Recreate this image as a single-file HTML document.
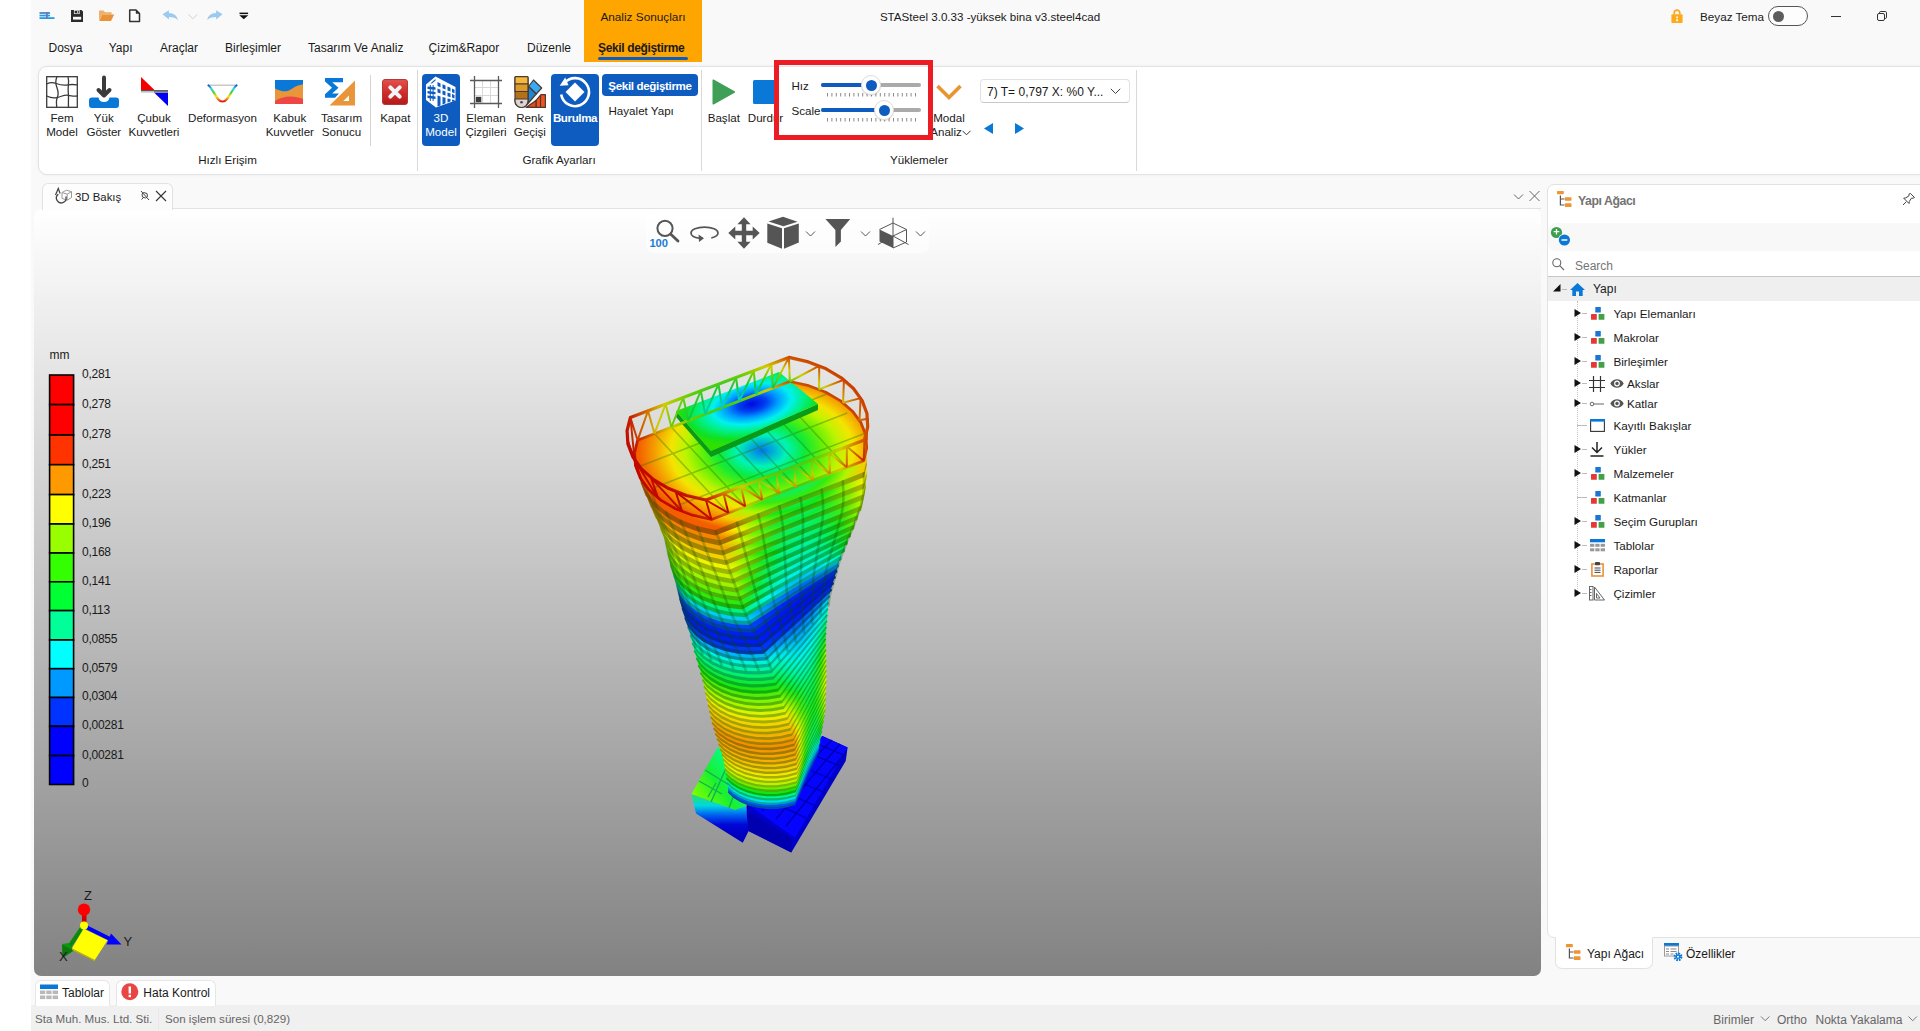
<!DOCTYPE html>
<html lang="tr"><head><meta charset="utf-8"><title>STASteel 3.0.33</title>
<style>
*{box-sizing:border-box;margin:0;padding:0}
html,body{width:1920px;height:1031px;overflow:hidden;background:#fff}
body{font-family:"Liberation Sans",sans-serif;font-size:11.6px;color:#1a1a1a}
#app{position:absolute;left:0;top:0;width:1920px;height:1031px;overflow:hidden;background:#fff}
.a{position:absolute}
.t{position:absolute;white-space:nowrap;line-height:14px;height:14px}
.b{font-weight:bold}
svg{position:absolute;overflow:visible}
#win{position:absolute;left:31px;top:0;width:1889px;height:1031px;background:#f9f9f9}
#tabhl{position:absolute;left:584px;top:0;width:118px;height:62px;background:#ffa500}
#ribbon{position:absolute;left:38px;top:66px;width:1890px;height:109px;background:#fff;border:1px solid #e3e3e3;border-radius:9px 0 0 9px;box-shadow:0 0 3px rgba(0,0,0,.06)}
.gsep{position:absolute;top:70px;width:1px;height:101px;background:#d9d9d9}
.bluebtn{position:absolute;background:#0e5cbf;border-radius:4px}
#status{position:absolute;left:31px;top:1005px;width:1889px;height:26px;background:#f0f0f0}
.gr{color:#666}

</style></head>
<body>
<div id="app">
<div id="win"></div>
<div id="tabhl"></div>
<svg style="left:38px;top:8px" width="215" height="16" viewBox="38 8 215 16">
<rect x="39.500" y="12.100" width="10.500" height="1.800" fill="#5b7fc0"/><rect x="39.500" y="14.700" width="10.500" height="1.700" fill="#1ea0e6"/><rect x="39.500" y="17.200" width="15" height="1.800" fill="#1ea0e6"/><rect x="46" y="12.100" width="1.800" height="6.900" fill="#5b7fc0"/>
<path d="M71 10h10.400l1.600 1.600v10.400h-12z" fill="#2b2b2b"/><rect x="74.300" y="10.400" width="5" height="3.300" fill="#2b2b2b" stroke="#f4f4f4" stroke-width=".7"/><rect x="77.200" y="11.200" width="1" height="1.800" fill="#f4f4f4"/><rect x="73" y="16.800" width="8.200" height="2.800" fill="#fbfbfb"/>
<path d="M99 10.6h4.6l1.4 1.6h6.6v2.2h-9.4l-3.2 6.2z" fill="#f0b06a"/><path d="M102.2 14.6h12l-3.2 6.4H99.2z" fill="#e8923a"/>
<path d="M129.700 10h6.300l3.500 3.500v7.900h-9.800z" fill="#fdfdfd" stroke="#333" stroke-width="1.500" stroke-linejoin="round"/><path d="M135.800 9.800l4 4h-4z" fill="#333"/>
<path d="M162.5 14.3l6.4-4v2.6c5 .2 8.3 2.8 9 7.2-2-2.3-4.6-3.2-9-3.2v2.7z" fill="#9cc9ee"/>
<path d="M188.5 14.5l4.3 4.3 4.3-4.3" fill="none" stroke="#cfcfcf" stroke-width="1"/>
<path d="M222.5 14.3l-6.4-4v2.6c-5 .2-8.3 2.8-9 7.2 2-2.3 4.6-3.2 9-3.2v2.7z" fill="#9cc9ee"/>
<rect x="239.5" y="12.6" width="8.6" height="1.5" fill="#111"/><path d="M239.3 15.2h9l-4.5 4z" fill="#111"/>
</svg>
<span class="t" style="top:41.34px;font-size:12px;left:48.5px;">Dosya</span><span class="t" style="top:41.34px;font-size:12px;left:108.7px;">Yapı</span><span class="t" style="top:41.34px;font-size:12px;left:160px;">Araçlar</span><span class="t" style="top:41.34px;font-size:12px;left:225px;">Birleşimler</span><span class="t" style="top:41.34px;font-size:12px;left:308px;">Tasarım Ve Analiz</span><span class="t" style="top:41.34px;font-size:12px;left:428.6px;">Çizim&amp;Rapor</span><span class="t" style="top:41.34px;font-size:12px;left:527px;">Düzenle</span><span class="t b" style="top:41.34px;font-size:12px;left:598px;letter-spacing:-0.35px;">Şekil değiştirme</span><div class="a" style="left:598px;top:57.2px;width:90px;height:2.8px;border-radius:1.5px;background:#0e5cbf"></div>
<span class="t" style="top:9.51px;font-size:11.8px;left:493px;width:300px;text-align:center;">Analiz Sonuçları</span><span class="t" style="top:9.58px;font-size:11.6px;left:840px;width:300px;text-align:center;">STASteel 3.0.33 -yüksek bina v3.steel4cad</span><svg style="left:1670px;top:8px" width="16" height="16" viewBox="1670 8 16 16"><path d="M1674.2 14.5v-1.6a2.8 2.8 0 0 1 5.6 0v1.6" fill="none" stroke="#f9a825" stroke-width="1.7"/><rect x="1671.4" y="14.3" width="11.2" height="8.6" rx="1" fill="#fbaa19"/><rect x="1676.3" y="16.4" width="1.5" height="1.6" fill="#fff"/><rect x="1676.3" y="18.8" width="1.5" height="2.6" fill="#fff"/></svg><span class="t" style="top:9.95px;font-size:11.7px;left:1700px;">Beyaz Tema</span><div class="a" style="left:1768px;top:6px;width:40px;height:20px;border:1px solid #555;border-radius:10px;background:#fdfdfd"></div><div class="a" style="left:1772.5px;top:10.5px;width:11px;height:11px;border-radius:50%;background:#5d5d5d"></div>
<div class="a" style="left:1831px;top:16px;width:10px;height:1px;background:#333"></div>
<svg style="left:1876px;top:10px" width="12" height="12" viewBox="0 0 12 12"><rect x="1.5" y="3.5" width="7" height="7" rx="1.5" fill="none" stroke="#333" stroke-width="1"/><path d="M3.5 3.2V2.8a1.3 1.3 0 0 1 1.3-1.3h4.4a1.3 1.3 0 0 1 1.3 1.3v4.4a1.3 1.3 0 0 1-1.3 1.3h-.4" fill="none" stroke="#333" stroke-width="1"/></svg>
<div id="ribbon"></div>
<div class="gsep" style="left:417px"></div><div class="gsep" style="left:701px"></div><div class="gsep" style="left:1136px"></div><div class="a" style="left:370px;top:75px;width:1px;height:71px;background:#d4d4d4"></div>
<div class="bluebtn" style="left:422px;top:74px;width:38px;height:72px"></div><div class="bluebtn" style="left:551px;top:74px;width:48px;height:72px"></div><div class="bluebtn" style="left:602px;top:74px;width:96px;height:22px"></div>
<svg style="left:46px;top:76px" width="32" height="32" viewBox="0 0 32 32" fill="none" stroke="#3a3a3a" stroke-width="1.3">
<rect x=".7" y=".7" width="30.6" height="30.6"/>
<path d="M11 .7c-2 4-1.5 7 0 11s1.5 8-.3 11.500c-.6 2.500-.3 5.500 0 8"/><path d="M22 .7c.8 3 .8 6 .3 9.500-.6 4 .4 8 .2 12-.1 3-.2 6 0 9"/>
<path d="M.7 8c3-1.500 6-1.800 9.500-.5 4 1.500 8 2 12 1.300 3-.5 6-.3 9 0"/><path d="M.7 20c3 1.500 6.500 2.300 10 1.600 4-.8 7.500-3 11.700-2.300 3 .5 6 1.200 9 .7"/>
</svg><svg style="left:89px;top:76px" width="30" height="32" viewBox="0 0 30 32">
<path d="M3 21.500h6.500a5.600 5.600 0 0 0 11 0H27a3 3 0 0 1 3 3v4.500a3 3 0 0 1-3 3H3a3 3 0 0 1-3-3v-4.500a3 3 0 0 1 3-3z" fill="#0a78d7"/>
<path d="M15 1.500v17" stroke="#3b3b3b" stroke-width="4" stroke-linecap="round"/><path d="M9.500 14l5.500 5.500 5.500-5.500" fill="none" stroke="#3b3b3b" stroke-width="4" stroke-linecap="round" stroke-linejoin="round"/>
</svg><svg style="left:141px;top:77px" width="28" height="30" viewBox="0 0 28 30">
<path d="M0 0v13h13.500z" fill="#f40000"/><path d="M27 29V15.500H13z" fill="#0000f4"/>
<rect x="0" y="13" width="27" height="1.300" fill="#555"/><rect x="0" y="14.300" width="27" height="1.300" fill="#bbb"/><rect x="13" y="13.600" width="14" height="1.900" fill="#777"/>
</svg><svg style="left:206px;top:83px" width="33" height="21" viewBox="0 0 33 21" fill="none" stroke-width="2.200" stroke-linecap="round">
<defs><linearGradient id="dfg" x1="0" y1="0" x2="0" y2="1"><stop offset="0" stop-color="#1560d0"/><stop offset=".18" stop-color="#22d8e8"/><stop offset=".45" stop-color="#4fd12a"/><stop offset=".68" stop-color="#f3e21a"/><stop offset=".85" stop-color="#f28a1a"/><stop offset="1" stop-color="#e81818"/></linearGradient></defs>
<path d="M2.500 2.200h28" stroke="#c9c9c9" stroke-width="1.400"/>
<path d="M2.500 2.500C8 7 10.500 18.500 16.500 18.500S25 7 30.500 2.500" stroke="url(#dfg)"/>
</svg><svg style="left:275px;top:80px" width="28" height="24" viewBox="0 0 28 24">
<rect width="28" height="24" fill="#e9963a"/>
<path d="M0 0h28v4.500c-6 .5-9 3-13 5.500-4 2.400-9 1.500-15-1.500z" fill="#0a78d7"/>
<path d="M0 24v-3c7-5.500 20-6 28-2v5z" fill="#ee4545"/>
</svg><svg style="left:325px;top:78px" width="31" height="28" viewBox="0 0 31 28">
<path d="M0 0h18v4.300H7.200l6.300 5.500-6.300 5.600H14L10 19.800H0v-3.500l7-6.500-7-6.300z" fill="#0a78d7"/>
<path d="M30 2.500V27.500H4.500z" fill="#e9963a"/><path d="M24 17.500v5.500h-5.600z" fill="#fff"/>
</svg><svg style="left:382px;top:79px" width="26" height="26" viewBox="0 0 26 26">
<defs><linearGradient id="kpg" x1="0" y1="0" x2="0" y2="1"><stop offset="0" stop-color="#e2524d"/><stop offset=".5" stop-color="#cf2f2b"/><stop offset="1" stop-color="#b41a18"/></linearGradient></defs>
<rect x=".5" y=".5" width="25" height="25" rx="2.500" fill="url(#kpg)" stroke="#b33a36" stroke-width="1"/>
<path d="M8.300 8.300l9.400 9.400M17.700 8.300l-9.400 9.400" stroke="#f4f4f8" stroke-width="4" stroke-linecap="round"/>
</svg><svg style="left:425px;top:76px" width="32" height="32" viewBox="0 0 32 32">
<path d="M1 8.500L10.500.500 30.500 11v13.500L11 31.500 1 24z" fill="#fff"/>
<g fill="#0e5cbf"><path d="M2.500 10.500l8 .8v2.400l-8-.8zM2.500 15l8 .9v2.400l-8-.9zM2.500 19.500l8 1v2.400l-8-1z"/>
<rect x="4.800" y="9" width="1" height="16"/><rect x="7.600" y="9" width="1" height="16"/>
<path d="M12.500 6l3 1.400v3.800l-3-1.200zM17.500 8.200l3 1.400v3.800l-3-1.200zM22.500 10.400l3 1.400v3.800l-3-1.200zM27 12.500l2.500 1.200v3.600l-2.500-1zM12.500 12.500l3 1.200v3.800l-3-1.100zM17.500 14.500l3 1.100v3.800l-3-1zM22.500 16.500l3 1v3.800l-3-1zM27 18l2.500.9v3.500l-2.500-.9z"/>
<path d="M12.500 19.500l3 .9v9l-3 1.100zM17.500 21l3 .8v5.500l-3 1.100z"/><path d="M22.500 22.400l3 .7v2.300l-3 1zM27 23.500l2.500.6v.8l-2.500.8z"/>
<path d="M10.500 3l-5 4.200 1.500.2 3.500-3z"/></g>
</svg><svg style="left:470px;top:76px" width="32" height="32" viewBox="0 0 32 32">
<g stroke="#d8d8d8" stroke-width="1"><path d="M12.500 4v24M20.500 4v24M4 11.500h24M4 19.500h24"/></g>
<g stroke="#5a5a5a" stroke-width="1.300"><path d="M4.500 0v32M28.500 0v32M0 4.500h32M0 27.500h32"/></g>
<rect x="5.800" y="20.800" width="5.500" height="5.500" fill="#3a3a3a"/>
</svg><svg style="left:514px;top:76px" width="32" height="32" viewBox="0 0 32 32" stroke="#4a3a30" stroke-width="1.200" stroke-linejoin="round">
<path d="M16 31.400h15.400V18.600H27z" fill="#f4511e"/><path d="M22 24.500v6.900M26.500 19v12.400" fill="none"/><path d="M12 31.400h10v-7z" fill="#e64a19"/>
<path d="M14.500 10.500l5-6.500 8.200 8-5.500 6z" fill="#39a9f4"/><path d="M14.500 10.500l7.700 7.500L14 27.500z" fill="#1e88d8"/>
<path d="M1 1.600a1 1 0 0 1 1-1h11a1 1 0 0 1 1 1V25a6.500 6.500 0 0 1-13 0z" fill="#b5711a"/>
<path d="M1 1.600a1 1 0 0 1 1-1h11a1 1 0 0 1 1 1V8H1z" fill="#f6b73c"/><path d="M1 8h13v7.500H1z" fill="#dd9a2c"/><path d="M1 23h13v2a6.500 6.500 0 0 1-13 0z" fill="#d6d6d6"/>
<circle cx="7.500" cy="26.300" r="1.300" fill="#7a3030" stroke="none"/>
</svg><svg style="left:558px;top:75px" width="34" height="34" viewBox="-17 -17 34 34">
<path d="M-10.800 -8.800A14 14 0 1 1 -13.800 2.500" fill="none" stroke="#fff" stroke-width="2.600"/>
<path d="M-15.300 -6.200l8.800-.6-3.300-7.600z" fill="#fff"/>
<path d="M0 -9.500L9.500 0 0 9.500-9.500 0z" fill="#fff"/>
</svg><svg style="left:712px;top:79px" width="24" height="26" viewBox="0 0 24 26"><path d="M.5 1.200v23.600a.8.800 0 0 0 1.200.7L22.600 13.700a.8.800 0 0 0 0-1.400L1.700.5A.8.800 0 0 0 .5 1.200z" fill="#3f9f56"/></svg><div class="a" style="left:753px;top:80px;width:24px;height:24px;background:#0a78d7;border-radius:1.500px"></div>
<span class="t" style="top:111.48px;font-size:11.6px;left:-88px;width:300px;text-align:center;">Fem</span><span class="t" style="top:125.48px;font-size:11.6px;left:-88px;width:300px;text-align:center;">Model</span><span class="t" style="top:111.48px;font-size:11.6px;left:-46.2px;width:300px;text-align:center;">Yük</span><span class="t" style="top:125.48px;font-size:11.6px;left:-46.2px;width:300px;text-align:center;">Göster</span><span class="t" style="top:111.48px;font-size:11.6px;left:4px;width:300px;text-align:center;">Çubuk</span><span class="t" style="top:125.48px;font-size:11.6px;left:4px;width:300px;text-align:center;">Kuvvetleri</span><span class="t" style="top:111.48px;font-size:11.6px;left:72.5px;width:300px;text-align:center;">Deformasyon</span><span class="t" style="top:111.48px;font-size:11.6px;left:139.8px;width:300px;text-align:center;">Kabuk</span><span class="t" style="top:125.48px;font-size:11.6px;left:139.8px;width:300px;text-align:center;">Kuvvetler</span><span class="t" style="top:111.48px;font-size:11.6px;left:191.5px;width:300px;text-align:center;">Tasarım</span><span class="t" style="top:125.48px;font-size:11.6px;left:191.5px;width:300px;text-align:center;">Sonucu</span><span class="t" style="top:111.48px;font-size:11.6px;left:245.3px;width:300px;text-align:center;">Kapat</span><span class="t" style="top:111.48px;font-size:11.6px;left:291px;width:300px;text-align:center;color:#fff;">3D</span><span class="t" style="top:125.48px;font-size:11.6px;left:291px;width:300px;text-align:center;color:#fff;">Model</span><span class="t" style="top:111.48px;font-size:11.6px;left:336px;width:300px;text-align:center;">Eleman</span><span class="t" style="top:125.48px;font-size:11.6px;left:336px;width:300px;text-align:center;">Çizgileri</span><span class="t" style="top:111.48px;font-size:11.6px;left:379.79999999999995px;width:300px;text-align:center;">Renk</span><span class="t" style="top:125.48px;font-size:11.6px;left:379.79999999999995px;width:300px;text-align:center;">Geçişi</span><span class="t b" style="top:111.48px;font-size:11.6px;left:425px;width:300px;text-align:center;color:#fff;letter-spacing:-.4px;">Burulma</span><span class="t b" style="top:78.98px;font-size:11.6px;left:500px;width:300px;text-align:center;color:#fff;letter-spacing:-.35px;">Şekil değiştirme</span><span class="t" style="top:103.58px;font-size:11.6px;left:608.5px;">Hayalet Yapı</span><span class="t" style="top:111.48px;font-size:11.6px;left:573.8px;width:300px;text-align:center;">Başlat</span><span class="t" style="top:111.48px;font-size:11.6px;left:615.5px;width:300px;text-align:center;">Durdur</span><span class="t" style="top:152.78px;font-size:11.6px;left:77.5px;width:300px;text-align:center;">Hızlı Erişim</span><span class="t" style="top:152.78px;font-size:11.6px;left:409px;width:300px;text-align:center;">Grafik Ayarları</span><span class="t" style="top:152.78px;font-size:11.6px;left:769px;width:300px;text-align:center;">Yüklemeler</span><span class="t" style="top:111.48px;font-size:11.6px;left:799px;width:300px;text-align:center;">Modal</span><span class="t" style="top:125.48px;font-size:11.6px;left:796px;width:300px;text-align:center;">Analiz</span><svg style="left:962px;top:130px" width="9" height="6" viewBox="0 0 9 6"><path d="M.5.800l4 4 4-4" fill="none" stroke="#333" stroke-width="1"/></svg><svg style="left:935px;top:83px" width="28" height="18" viewBox="0 0 28 18"><path d="M2.500 3l11.500 11.500L25.500 3" fill="none" stroke="#e8952f" stroke-width="3.600"/></svg><span class="t" style="top:78.78px;font-size:11.6px;left:791.5px;">Hız</span><span class="t" style="top:103.58px;font-size:11.6px;left:791.5px;">Scale</span><div class="a" style="left:821px;top:83px;width:100px;height:4px;border-radius:2px;background:#aaa"></div><div class="a" style="left:821px;top:83px;width:50px;height:4px;border-radius:2px;background:#0e5cbf"></div><svg style="left:827px;top:92.7px" width="90" height="4" fill="#8a8a8a"><rect x="0.0" y="0" width="1" height="3.500"/><rect x="4.4" y="0" width="1" height="3.500"/><rect x="8.8" y="0" width="1" height="3.500"/><rect x="13.2" y="0" width="1" height="3.500"/><rect x="17.6" y="0" width="1" height="3.500"/><rect x="22.0" y="0" width="1" height="3.500"/><rect x="26.4" y="0" width="1" height="3.500"/><rect x="30.8" y="0" width="1" height="3.500"/><rect x="35.2" y="0" width="1" height="3.500"/><rect x="39.6" y="0" width="1" height="3.500"/><rect x="44.0" y="0" width="1" height="3.500"/><rect x="48.4" y="0" width="1" height="3.500"/><rect x="52.8" y="0" width="1" height="3.500"/><rect x="57.2" y="0" width="1" height="3.500"/><rect x="61.6" y="0" width="1" height="3.500"/><rect x="66.0" y="0" width="1" height="3.500"/><rect x="70.4" y="0" width="1" height="3.500"/><rect x="74.8" y="0" width="1" height="3.500"/><rect x="79.2" y="0" width="1" height="3.500"/><rect x="83.6" y="0" width="1" height="3.500"/><rect x="88.0" y="0" width="1" height="3.500"/></svg><div class="a" style="left:861px;top:75px;width:20px;height:20px;border-radius:50%;background:#fff;border:1px solid #ddd;box-shadow:0 1px 1px rgba(0,0,0,.12)"></div><div class="a" style="left:865.5px;top:79.5px;width:11px;height:11px;border-radius:50%;background:#0e5cbf"></div>
<div class="a" style="left:821px;top:108px;width:100px;height:4px;border-radius:2px;background:#aaa"></div><div class="a" style="left:821px;top:108px;width:63px;height:4px;border-radius:2px;background:#0e5cbf"></div><svg style="left:827px;top:117.7px" width="90" height="4" fill="#8a8a8a"><rect x="0.0" y="0" width="1" height="3.500"/><rect x="4.4" y="0" width="1" height="3.500"/><rect x="8.8" y="0" width="1" height="3.500"/><rect x="13.2" y="0" width="1" height="3.500"/><rect x="17.6" y="0" width="1" height="3.500"/><rect x="22.0" y="0" width="1" height="3.500"/><rect x="26.4" y="0" width="1" height="3.500"/><rect x="30.8" y="0" width="1" height="3.500"/><rect x="35.2" y="0" width="1" height="3.500"/><rect x="39.6" y="0" width="1" height="3.500"/><rect x="44.0" y="0" width="1" height="3.500"/><rect x="48.4" y="0" width="1" height="3.500"/><rect x="52.8" y="0" width="1" height="3.500"/><rect x="57.2" y="0" width="1" height="3.500"/><rect x="61.6" y="0" width="1" height="3.500"/><rect x="66.0" y="0" width="1" height="3.500"/><rect x="70.4" y="0" width="1" height="3.500"/><rect x="74.8" y="0" width="1" height="3.500"/><rect x="79.2" y="0" width="1" height="3.500"/><rect x="83.6" y="0" width="1" height="3.500"/><rect x="88.0" y="0" width="1" height="3.500"/></svg><div class="a" style="left:874px;top:100px;width:20px;height:20px;border-radius:50%;background:#fff;border:1px solid #ddd;box-shadow:0 1px 1px rgba(0,0,0,.12)"></div><div class="a" style="left:878.5px;top:104.5px;width:11px;height:11px;border-radius:50%;background:#0e5cbf"></div>
<div class="a" style="left:980px;top:79px;width:150px;height:24px;border:1px solid #e2e2e2;border-bottom-color:#c9c9c9;border-radius:4px;background:#fff"></div><span class="t" style="top:84.84px;font-size:12px;left:987px;">7) T= 0,797 X: %0 Y...</span><svg style="left:1110px;top:88px" width="11" height="7" viewBox="0 0 11 7"><path d="M.800.800l4.700 4.700L10.200.800" fill="none" stroke="#444" stroke-width="1"/></svg><svg style="left:984px;top:123px" width="41" height="11" viewBox="0 0 41 11" fill="#0a78d7"><path d="M0 5.500L9 0v11z"/><path d="M40 5.500L31 0v11z"/></svg>
<div class="a" style="left:774px;top:60px;width:159px;height:80px;border:5px solid #ec1c24"></div>
<div class="a" style="left:172px;top:208px;width:1369px;height:1px;background:#e2e2e2"></div><div id="vp" class="a" style="left:33.500px;top:208.500px;width:1507.500px;height:767px;border-radius:8px 7px 7px 7px;background:linear-gradient(180deg,#ffffff 0%,#828282 100%)"></div>
<div class="a" style="left:42px;top:183px;width:130.500px;height:26.500px;background:#fdfdfd;border:1px solid #e2e2e2;border-bottom:none;border-radius:6px 6px 0 0"></div><svg style="left:53px;top:186px" width="20" height="20" viewBox="0 0 20 20" fill="none" stroke="#555" stroke-width="1">
<path d="M9 6.500l4.500-2.300 5 1.500v5.800l-4.300 2.700-5.200-1.800z" stroke="#999"/><path d="M9 6.500l5.200 1.700 4.300-2.500M14.200 8.200v6" stroke="#999"/>
<path d="M12.800 10.500a4.800 4.800 0 1 1-7.500-2.200" stroke="#444" stroke-width="1.300"/><path d="M2.500 9l2.800-6.500 1.800 5" stroke="#444" stroke-width="1.200"/></svg><span class="t" style="top:190.05px;font-size:11.4px;left:75px;">3D Bakış</span><svg style="left:140px;top:190px" width="10" height="11" viewBox="0 0 10 11" fill="none" stroke="#444" stroke-width="1"><path d="M1 1l8 9M3.500 2.500l3.500 1 .5 3-2 1.500-3-1-.5-3zM1.500 9.500L4 7"/></svg><svg style="left:155px;top:190px" width="12" height="12" viewBox="0 0 12 12"><path d="M1 1l10 10M11 1L1 11" stroke="#333" stroke-width="1.100"/></svg><svg style="left:1513px;top:190px" width="28" height="12" viewBox="0 0 28 12" fill="none" stroke="#666" stroke-width="1"><path d="M1 4.500l4.500 4.500L10 4.500"/><path d="M16.500 1l10 10M26.500 1l-10 10"/></svg>
<div class="a" style="left:646px;top:213px;width:283px;height:40px;border-radius:8px;background:rgba(255,255,255,.55)"></div><svg style="left:646px;top:213px" width="283" height="40" viewBox="646 213 283 40">
<g fill="none" stroke="#555" stroke-linecap="round"><circle cx="665" cy="228.300" r="7.600" stroke-width="2"/><path d="M670.800 234.200l7.200 6.800" stroke-width="2.800"/>
<path d="M701 238.500c-7-.6-10-3-10-5.500 0-3.400 6-5.800 13.500-5.800s13.500 2.400 13.500 5.800c0 2-2.200 3.800-6 4.800" stroke-width="1.700"/></g>
<path d="M698.500 234.500l5.500 3.800-5 3.700z" fill="#555"/>
<g fill="#555"><path d="M744 217.300l6.600 7h-4.400v6.500h6.500v-4.400l7 6.600-7 6.600v-4.400h-6.500v6.500h4.400l-6.600 7-6.600-7h4.400v-6.500h-6.500v4.400l-7-6.600 7-6.600v4.400h6.500v-6.500h-4.400z"/>
<path d="M783 216.800l14.500 5-14 4.500-15-4.800z"/><path d="M767.300 223.500l14.700 4.800v20.400l-14.700-6z"/><path d="M784 228.300l14.800-4.800v19l-14.800 6.200z"/>
<path d="M825.400 219h24.800l-9.300 11v11.500l-5.500 5.500v-17z"/>
<path d="M879.500 229.500l13.500 6.500v12l-13.500-6.500z"/></g>
<g fill="none" stroke="#555" stroke-width="1"><path d="M893 217.700v30.300M879.500 229.500l13.500-6.500 13.500 6.500v12.500L893 248M893 236l13.500-6.500M893 236l-15 8.500M893 236l15.500 8.500"/></g>
<g fill="none" stroke="#555" stroke-width="1"><path d="M806 231.500l4.500 4.500 4.500-4.500M861 231.500l4.500 4.500 4.500-4.500M916 231.500l4.500 4.500 4.500-4.500"/></g>
</svg><span class="t b" style="top:236.12px;font-size:11.2px;left:649.5px;color:#1c7cd5;letter-spacing:-.1px;">100</span><span class="t" style="top:347.64px;font-size:12px;left:49.5px;">mm</span><svg style="left:48px;top:374px" width="28" height="412" viewBox="48 374 28 412"><rect x="49.600" y="375.0" width="24" height="29.6" fill="#ff0000" stroke="#000" stroke-width="1.600"/><rect x="49.600" y="404.6" width="24" height="30.4" fill="#ff0000" stroke="#000" stroke-width="1.600"/><rect x="49.600" y="435.0" width="24" height="29.7" fill="#ff3300" stroke="#000" stroke-width="1.600"/><rect x="49.600" y="464.7" width="24" height="29.9" fill="#ff9900" stroke="#000" stroke-width="1.600"/><rect x="49.600" y="494.6" width="24" height="29.4" fill="#ffff00" stroke="#000" stroke-width="1.600"/><rect x="49.600" y="524.0" width="24" height="29.0" fill="#99ff00" stroke="#000" stroke-width="1.600"/><rect x="49.600" y="553.0" width="24" height="28.8" fill="#33ff00" stroke="#000" stroke-width="1.600"/><rect x="49.600" y="581.8" width="24" height="28.8" fill="#00ff33" stroke="#000" stroke-width="1.600"/><rect x="49.600" y="610.6" width="24" height="29.4" fill="#00ff99" stroke="#000" stroke-width="1.600"/><rect x="49.600" y="640.0" width="24" height="28.7" fill="#00ffff" stroke="#000" stroke-width="1.600"/><rect x="49.600" y="668.7" width="24" height="28.8" fill="#0099ff" stroke="#000" stroke-width="1.600"/><rect x="49.600" y="697.5" width="24" height="28.8" fill="#0033ff" stroke="#000" stroke-width="1.600"/><rect x="49.600" y="726.3" width="24" height="29.3" fill="#0000ff" stroke="#000" stroke-width="1.600"/><rect x="49.600" y="755.6" width="24" height="28.9" fill="#0000ff" stroke="#000" stroke-width="1.600"/></svg>
<span class="t" style="top:366.94px;font-size:12px;left:82px;letter-spacing:-.25px;">0,281</span><span class="t" style="top:396.54px;font-size:12px;left:82px;letter-spacing:-.25px;">0,278</span><span class="t" style="top:426.94px;font-size:12px;left:82px;letter-spacing:-.25px;">0,278</span><span class="t" style="top:456.64px;font-size:12px;left:82px;letter-spacing:-.25px;">0,251</span><span class="t" style="top:486.54px;font-size:12px;left:82px;letter-spacing:-.25px;">0,223</span><span class="t" style="top:515.94px;font-size:12px;left:82px;letter-spacing:-.25px;">0,196</span><span class="t" style="top:544.94px;font-size:12px;left:82px;letter-spacing:-.25px;">0,168</span><span class="t" style="top:573.74px;font-size:12px;left:82px;letter-spacing:-.25px;">0,141</span><span class="t" style="top:602.54px;font-size:12px;left:82px;letter-spacing:-.25px;">0,113</span><span class="t" style="top:631.94px;font-size:12px;left:82px;letter-spacing:-.25px;">0,0855</span><span class="t" style="top:660.64px;font-size:12px;left:82px;letter-spacing:-.25px;">0,0579</span><span class="t" style="top:689.44px;font-size:12px;left:82px;letter-spacing:-.25px;">0,0304</span><span class="t" style="top:718.24px;font-size:12px;left:82px;letter-spacing:-.25px;">0,00281</span><span class="t" style="top:747.54px;font-size:12px;left:82px;letter-spacing:-.25px;">0,00281</span><span class="t" style="top:776.44px;font-size:12px;left:82px;letter-spacing:-.25px;">0</span><svg style="left:55px;top:888px" width="85" height="78" viewBox="55 888 85 78">
<path d="M82 928l-13 19" stroke="#0a8a0a" stroke-width="4"/><path d="M62 944l12 6.500-11.500 7.500z" fill="#0a7a0a"/><path d="M62 944l12 6.500-5-7.500z" fill="#0c960c"/>
<path d="M86 927l24 12" stroke="#0000f0" stroke-width="4"/><path d="M111 933.500l10.500 11h-15z" fill="#0000ff"/>
<path d="M83.500 928.800l24 11.500-12.700 19.700-22.800-11.500z" fill="#ffff00"/><path d="M72 948.500l22.800 11.500.5 1.500-23.300-11.500z" fill="#b8b800"/>
<rect x="82" y="912" width="4.500" height="13" fill="#d40000"/><circle cx="84" cy="909.600" r="6.200" fill="#ff0000"/><circle cx="84" cy="925.500" r="4" fill="#ffff00"/>
</svg><span class="t" style="top:889.00px;font-size:13px;left:84px;">Z</span><span class="t" style="top:949.50px;font-size:13px;left:59px;">X</span><span class="t" style="top:935.00px;font-size:13px;left:123.5px;">Y</span><svg style="left:560px;top:330px" width="400" height="560" viewBox="560 330 400 560"><defs><linearGradient id="pdg" gradientUnits="userSpaceOnUse" x1="696" y1="800" x2="745" y2="765"><stop offset="0" stop-color="#80ff00"/><stop offset=".45" stop-color="#18f030"/><stop offset="1" stop-color="#00ffa8"/></linearGradient><linearGradient id="pdg2" gradientUnits="userSpaceOnUse" x1="0" y1="796" x2="0" y2="834"><stop offset="0" stop-color="#20e070"/><stop offset=".25" stop-color="#00d8e0"/><stop offset=".5" stop-color="#0060f0"/><stop offset=".75" stop-color="#0008d8"/><stop offset="1" stop-color="#0000c0"/></linearGradient><radialGradient id="f43" gradientUnits="userSpaceOnUse" cx="0" cy="0" r="1" gradientTransform="matrix(16.759 -37.113 57.673 10.784 772.61 765.32)"><stop offset="0.00" stop-color="#0000f4"/><stop offset="0.20" stop-color="#000cf4"/><stop offset="0.35" stop-color="#0015f4"/><stop offset="0.50" stop-color="#001ff4"/><stop offset="0.62" stop-color="#0028f4"/><stop offset="0.74" stop-color="#0037f4"/><stop offset="0.86" stop-color="#0046f4"/><stop offset="1.00" stop-color="#0058f4"/></radialGradient><radialGradient id="f42" gradientUnits="userSpaceOnUse" cx="0" cy="0" r="1" gradientTransform="matrix(16.967 -37.281 57.935 10.918 772.71 760.88)"><stop offset="0.00" stop-color="#0000f4"/><stop offset="0.20" stop-color="#0018f4"/><stop offset="0.35" stop-color="#0031f4"/><stop offset="0.50" stop-color="#0055f4"/><stop offset="0.62" stop-color="#0073f4"/><stop offset="0.74" stop-color="#0092f4"/><stop offset="0.86" stop-color="#00b5f4"/><stop offset="1.00" stop-color="#00def4"/></radialGradient><radialGradient id="f41" gradientUnits="userSpaceOnUse" cx="0" cy="0" r="1" gradientTransform="matrix(17.374 -37.876 58.859 11.180 772.75 755.95)"><stop offset="0.00" stop-color="#0000f4"/><stop offset="0.20" stop-color="#0022f4"/><stop offset="0.35" stop-color="#0051f4"/><stop offset="0.50" stop-color="#0085f4"/><stop offset="0.62" stop-color="#00b4f4"/><stop offset="0.74" stop-color="#00e4f4"/><stop offset="0.86" stop-color="#00f4d3"/><stop offset="1.00" stop-color="#00f49a"/></radialGradient><radialGradient id="f40" gradientUnits="userSpaceOnUse" cx="0" cy="0" r="1" gradientTransform="matrix(17.791 -38.478 59.794 11.448 772.80 750.95)"><stop offset="0.00" stop-color="#0000f4"/><stop offset="0.20" stop-color="#0030f4"/><stop offset="0.35" stop-color="#0071f4"/><stop offset="0.50" stop-color="#00b8f4"/><stop offset="0.62" stop-color="#00f4f3"/><stop offset="0.74" stop-color="#00f4b5"/><stop offset="0.86" stop-color="#04f170"/><stop offset="1.00" stop-color="#12e615"/></radialGradient><radialGradient id="f39" gradientUnits="userSpaceOnUse" cx="0" cy="0" r="1" gradientTransform="matrix(18.217 -39.087 60.741 11.723 772.85 745.88)"><stop offset="0.00" stop-color="#0000f4"/><stop offset="0.20" stop-color="#003cf4"/><stop offset="0.35" stop-color="#0086f4"/><stop offset="0.50" stop-color="#00dbf4"/><stop offset="0.62" stop-color="#00f4c7"/><stop offset="0.74" stop-color="#02f27d"/><stop offset="0.86" stop-color="#10e824"/><stop offset="1.00" stop-color="#69f005"/></radialGradient><radialGradient id="f38" gradientUnits="userSpaceOnUse" cx="0" cy="0" r="1" gradientTransform="matrix(18.654 -39.703 61.698 12.004 772.91 740.74)"><stop offset="0.00" stop-color="#0000f4"/><stop offset="0.20" stop-color="#0047f4"/><stop offset="0.35" stop-color="#009cf4"/><stop offset="0.50" stop-color="#00f4eb"/><stop offset="0.62" stop-color="#00f49c"/><stop offset="0.74" stop-color="#0ceb3c"/><stop offset="0.86" stop-color="#4ded0a"/><stop offset="1.00" stop-color="#b8f400"/></radialGradient><radialGradient id="f37" gradientUnits="userSpaceOnUse" cx="0" cy="0" r="1" gradientTransform="matrix(19.100 -40.326 62.667 12.291 772.97 735.53)"><stop offset="0.00" stop-color="#0000f4"/><stop offset="0.20" stop-color="#004ef4"/><stop offset="0.35" stop-color="#00abf4"/><stop offset="0.50" stop-color="#00f4d6"/><stop offset="0.62" stop-color="#02f27f"/><stop offset="0.74" stop-color="#12e615"/><stop offset="0.86" stop-color="#7af203"/><stop offset="1.00" stop-color="#e3f400"/></radialGradient><radialGradient id="f36" gradientUnits="userSpaceOnUse" cx="0" cy="0" r="1" gradientTransform="matrix(19.558 -40.957 63.647 12.585 773.03 730.25)"><stop offset="0.00" stop-color="#0000f4"/><stop offset="0.20" stop-color="#0054f4"/><stop offset="0.35" stop-color="#00b5f4"/><stop offset="0.50" stop-color="#00f4c7"/><stop offset="0.62" stop-color="#06f067"/><stop offset="0.74" stop-color="#2de90f"/><stop offset="0.86" stop-color="#9af400"/><stop offset="1.00" stop-color="#f4e700"/></radialGradient><radialGradient id="f35" gradientUnits="userSpaceOnUse" cx="0" cy="0" r="1" gradientTransform="matrix(20.026 -41.595 64.638 12.887 772.69 724.90)"><stop offset="0.00" stop-color="#0000f4"/><stop offset="0.20" stop-color="#0058f4"/><stop offset="0.35" stop-color="#00bdf4"/><stop offset="0.50" stop-color="#00f4bb"/><stop offset="0.62" stop-color="#09ed54"/><stop offset="0.74" stop-color="#43ec0b"/><stop offset="0.86" stop-color="#aff400"/><stop offset="1.00" stop-color="#f4d000"/></radialGradient><radialGradient id="f34" gradientUnits="userSpaceOnUse" cx="0" cy="0" r="1" gradientTransform="matrix(20.505 -42.240 65.641 13.195 771.99 719.48)"><stop offset="0.00" stop-color="#0000f4"/><stop offset="0.20" stop-color="#005bf4"/><stop offset="0.35" stop-color="#00c4f4"/><stop offset="0.50" stop-color="#00f4b2"/><stop offset="0.62" stop-color="#0bec46"/><stop offset="0.74" stop-color="#54ed09"/><stop offset="0.86" stop-color="#bff400"/><stop offset="1.00" stop-color="#f4c000"/></radialGradient><radialGradient id="f33" gradientUnits="userSpaceOnUse" cx="0" cy="0" r="1" gradientTransform="matrix(20.996 -42.893 66.656 13.511 771.28 713.98)"><stop offset="0.00" stop-color="#0000f4"/><stop offset="0.20" stop-color="#005ef4"/><stop offset="0.35" stop-color="#00caf4"/><stop offset="0.50" stop-color="#00f4a9"/><stop offset="0.62" stop-color="#0dea38"/><stop offset="0.74" stop-color="#65ef06"/><stop offset="0.86" stop-color="#cef400"/><stop offset="1.00" stop-color="#f4af00"/></radialGradient><radialGradient id="f32" gradientUnits="userSpaceOnUse" cx="0" cy="0" r="1" gradientTransform="matrix(21.498 -43.553 67.682 13.834 770.57 708.40)"><stop offset="0.00" stop-color="#0000f4"/><stop offset="0.20" stop-color="#005ff4"/><stop offset="0.35" stop-color="#00cef4"/><stop offset="0.50" stop-color="#00f4a3"/><stop offset="0.62" stop-color="#0ee92f"/><stop offset="0.74" stop-color="#70f104"/><stop offset="0.86" stop-color="#d9f400"/><stop offset="1.00" stop-color="#f4a400"/></radialGradient><radialGradient id="f31" gradientUnits="userSpaceOnUse" cx="0" cy="0" r="1" gradientTransform="matrix(22.013 -44.221 68.720 14.165 769.86 702.75)"><stop offset="0.00" stop-color="#0000f4"/><stop offset="0.20" stop-color="#0061f4"/><stop offset="0.35" stop-color="#00d1f4"/><stop offset="0.50" stop-color="#00f49e"/><stop offset="0.62" stop-color="#10e827"/><stop offset="0.74" stop-color="#79f203"/><stop offset="0.86" stop-color="#e2f400"/><stop offset="1.00" stop-color="#f49a00"/></radialGradient><radialGradient id="f30" gradientUnits="userSpaceOnUse" cx="0" cy="0" r="1" gradientTransform="matrix(22.539 -44.897 69.770 14.504 769.14 697.02)"><stop offset="0.00" stop-color="#0000f4"/><stop offset="0.20" stop-color="#0063f4"/><stop offset="0.35" stop-color="#00d5f4"/><stop offset="0.50" stop-color="#00f499"/><stop offset="0.62" stop-color="#11e71f"/><stop offset="0.74" stop-color="#83f301"/><stop offset="0.86" stop-color="#ebf400"/><stop offset="1.00" stop-color="#f49100"/></radialGradient><radialGradient id="f29" gradientUnits="userSpaceOnUse" cx="0" cy="0" r="1" gradientTransform="matrix(23.221 -45.327 70.438 14.943 768.45 691.36)"><stop offset="0.00" stop-color="#0000f4"/><stop offset="0.20" stop-color="#0060f4"/><stop offset="0.35" stop-color="#00cff4"/><stop offset="0.50" stop-color="#00f4a1"/><stop offset="0.62" stop-color="#0fe92c"/><stop offset="0.74" stop-color="#73f104"/><stop offset="0.86" stop-color="#dcf400"/><stop offset="1.00" stop-color="#f4a000"/></radialGradient><radialGradient id="f28" gradientUnits="userSpaceOnUse" cx="0" cy="0" r="1" gradientTransform="matrix(24.218 -45.222 70.275 15.584 767.84 685.92)"><stop offset="0.00" stop-color="#0000f4"/><stop offset="0.20" stop-color="#005df4"/><stop offset="0.35" stop-color="#00c8f4"/><stop offset="0.50" stop-color="#00f4ab"/><stop offset="0.62" stop-color="#0ceb3b"/><stop offset="0.74" stop-color="#61ef07"/><stop offset="0.86" stop-color="#cbf400"/><stop offset="1.00" stop-color="#f4b200"/></radialGradient><radialGradient id="f27" gradientUnits="userSpaceOnUse" cx="0" cy="0" r="1" gradientTransform="matrix(25.234 -45.106 70.094 16.238 767.23 680.38)"><stop offset="0.00" stop-color="#0000f4"/><stop offset="0.20" stop-color="#005af4"/><stop offset="0.35" stop-color="#00c2f4"/><stop offset="0.50" stop-color="#00f4b4"/><stop offset="0.62" stop-color="#0aec4a"/><stop offset="0.74" stop-color="#50ed09"/><stop offset="0.86" stop-color="#bbf400"/><stop offset="1.00" stop-color="#f4c400"/></radialGradient><radialGradient id="f26" gradientUnits="userSpaceOnUse" cx="0" cy="0" r="1" gradientTransform="matrix(26.268 -44.977 69.895 16.904 766.62 674.74)"><stop offset="0.00" stop-color="#0000f4"/><stop offset="0.20" stop-color="#0057f4"/><stop offset="0.35" stop-color="#00bcf4"/><stop offset="0.50" stop-color="#00f4bd"/><stop offset="0.62" stop-color="#08ee57"/><stop offset="0.74" stop-color="#40eb0c"/><stop offset="0.86" stop-color="#acf400"/><stop offset="1.00" stop-color="#f4d400"/></radialGradient><radialGradient id="f25" gradientUnits="userSpaceOnUse" cx="0" cy="0" r="1" gradientTransform="matrix(27.322 -44.837 69.676 17.581 766.00 669.00)"><stop offset="0.00" stop-color="#0000f4"/><stop offset="0.20" stop-color="#0053f4"/><stop offset="0.35" stop-color="#00b5f4"/><stop offset="0.50" stop-color="#00f4c7"/><stop offset="0.62" stop-color="#06f067"/><stop offset="0.74" stop-color="#2de90f"/><stop offset="0.86" stop-color="#99f400"/><stop offset="1.00" stop-color="#f4e700"/></radialGradient><radialGradient id="f24" gradientUnits="userSpaceOnUse" cx="0" cy="0" r="1" gradientTransform="matrix(28.394 -44.683 69.437 18.272 765.38 663.17)"><stop offset="0.00" stop-color="#0000f4"/><stop offset="0.20" stop-color="#004df4"/><stop offset="0.35" stop-color="#00a7f4"/><stop offset="0.50" stop-color="#00f4dc"/><stop offset="0.62" stop-color="#01f387"/><stop offset="0.74" stop-color="#11e720"/><stop offset="0.86" stop-color="#6ef005"/><stop offset="1.00" stop-color="#d8f400"/></radialGradient><radialGradient id="f23" gradientUnits="userSpaceOnUse" cx="0" cy="0" r="1" gradientTransform="matrix(29.486 -44.515 69.176 18.974 764.76 657.23)"><stop offset="0.00" stop-color="#0000f4"/><stop offset="0.20" stop-color="#0046f4"/><stop offset="0.35" stop-color="#0098f4"/><stop offset="0.50" stop-color="#00f4f1"/><stop offset="0.62" stop-color="#00f4a3"/><stop offset="0.74" stop-color="#0bec47"/><stop offset="0.86" stop-color="#40eb0c"/><stop offset="1.00" stop-color="#acf400"/></radialGradient><radialGradient id="f22" gradientUnits="userSpaceOnUse" cx="0" cy="0" r="1" gradientTransform="matrix(30.598 -44.332 68.893 19.690 764.14 651.19)"><stop offset="0.00" stop-color="#0000f4"/><stop offset="0.20" stop-color="#003ff4"/><stop offset="0.35" stop-color="#008cf4"/><stop offset="0.50" stop-color="#00e5f4"/><stop offset="0.62" stop-color="#00f4bb"/><stop offset="0.74" stop-color="#05f06b"/><stop offset="0.86" stop-color="#16e612"/><stop offset="1.00" stop-color="#82f302"/></radialGradient><radialGradient id="f21" gradientUnits="userSpaceOnUse" cx="0" cy="0" r="1" gradientTransform="matrix(32.281 -44.343 68.910 20.773 763.49 644.64)"><stop offset="0.00" stop-color="#0000f4"/><stop offset="0.20" stop-color="#0039f4"/><stop offset="0.35" stop-color="#0080f4"/><stop offset="0.50" stop-color="#00d2f4"/><stop offset="0.62" stop-color="#00f4d3"/><stop offset="0.74" stop-color="#00f48e"/><stop offset="0.86" stop-color="#0dea39"/><stop offset="1.00" stop-color="#51ed09"/></radialGradient><radialGradient id="f20" gradientUnits="userSpaceOnUse" cx="0" cy="0" r="1" gradientTransform="matrix(34.046 -44.341 68.906 21.909 762.87 637.96)"><stop offset="0.00" stop-color="#0000f4"/><stop offset="0.20" stop-color="#0032f4"/><stop offset="0.35" stop-color="#0075f4"/><stop offset="0.50" stop-color="#00bef4"/><stop offset="0.62" stop-color="#00f4eb"/><stop offset="0.74" stop-color="#00f4ac"/><stop offset="0.86" stop-color="#06ef63"/><stop offset="1.00" stop-color="#1fe711"/></radialGradient><radialGradient id="f19" gradientUnits="userSpaceOnUse" cx="0" cy="0" r="1" gradientTransform="matrix(35.860 -44.310 68.857 23.076 762.28 631.18)"><stop offset="0.00" stop-color="#0000f4"/><stop offset="0.20" stop-color="#002cf4"/><stop offset="0.35" stop-color="#0069f4"/><stop offset="0.50" stop-color="#00abf4"/><stop offset="0.62" stop-color="#00e4f4"/><stop offset="0.74" stop-color="#00f4ca"/><stop offset="0.86" stop-color="#00f48e"/><stop offset="1.00" stop-color="#0dea39"/></radialGradient><radialGradient id="f18" gradientUnits="userSpaceOnUse" cx="0" cy="0" r="1" gradientTransform="matrix(37.721 -44.247 68.760 24.273 761.72 624.28)"><stop offset="0.00" stop-color="#0000f4"/><stop offset="0.20" stop-color="#0025f4"/><stop offset="0.35" stop-color="#005df4"/><stop offset="0.50" stop-color="#0096f4"/><stop offset="0.62" stop-color="#00cbf4"/><stop offset="0.74" stop-color="#00f4e8"/><stop offset="0.86" stop-color="#00f4b2"/><stop offset="1.00" stop-color="#05f06c"/></radialGradient><radialGradient id="f17" gradientUnits="userSpaceOnUse" cx="0" cy="0" r="1" gradientTransform="matrix(39.631 -44.151 68.610 25.502 761.19 617.27)"><stop offset="0.00" stop-color="#0000f4"/><stop offset="0.20" stop-color="#0021f4"/><stop offset="0.35" stop-color="#004ef4"/><stop offset="0.50" stop-color="#0081f4"/><stop offset="0.62" stop-color="#00adf4"/><stop offset="0.74" stop-color="#00ddf4"/><stop offset="0.86" stop-color="#00f4dc"/><stop offset="1.00" stop-color="#00f4a4"/></radialGradient><radialGradient id="f16" gradientUnits="userSpaceOnUse" cx="0" cy="0" r="1" gradientTransform="matrix(41.589 -44.019 68.406 26.762 760.69 610.16)"><stop offset="0.00" stop-color="#0000f4"/><stop offset="0.20" stop-color="#001df4"/><stop offset="0.35" stop-color="#003ff4"/><stop offset="0.50" stop-color="#006bf4"/><stop offset="0.62" stop-color="#008ef4"/><stop offset="0.74" stop-color="#00b7f4"/><stop offset="0.86" stop-color="#00e0f4"/><stop offset="1.00" stop-color="#00f4d8"/></radialGradient><radialGradient id="f15" gradientUnits="userSpaceOnUse" cx="0" cy="0" r="1" gradientTransform="matrix(44.182 -43.909 68.235 28.431 760.33 602.61)"><stop offset="0.00" stop-color="#0000f4"/><stop offset="0.20" stop-color="#0015f4"/><stop offset="0.35" stop-color="#0026f4"/><stop offset="0.50" stop-color="#0045f4"/><stop offset="0.62" stop-color="#005ff4"/><stop offset="0.74" stop-color="#0078f4"/><stop offset="0.86" stop-color="#0093f4"/><stop offset="1.00" stop-color="#00b6f4"/></radialGradient><radialGradient id="f14" gradientUnits="userSpaceOnUse" cx="0" cy="0" r="1" gradientTransform="matrix(47.564 -43.787 68.045 30.608 760.21 594.57)"><stop offset="0.00" stop-color="#0000f4"/><stop offset="0.20" stop-color="#0009f4"/><stop offset="0.35" stop-color="#0010f4"/><stop offset="0.50" stop-color="#0017f4"/><stop offset="0.62" stop-color="#001df4"/><stop offset="0.74" stop-color="#0024f4"/><stop offset="0.86" stop-color="#002df4"/><stop offset="1.00" stop-color="#003af4"/></radialGradient><radialGradient id="f13" gradientUnits="userSpaceOnUse" cx="0" cy="0" r="1" gradientTransform="matrix(51.084 -43.556 67.686 32.873 760.22 586.38)"><stop offset="0.00" stop-color="#0000f4"/><stop offset="0.20" stop-color="#0005f4"/><stop offset="0.35" stop-color="#0009f4"/><stop offset="0.50" stop-color="#000df4"/><stop offset="0.62" stop-color="#0011f4"/><stop offset="0.74" stop-color="#0014f4"/><stop offset="0.86" stop-color="#0018f4"/><stop offset="1.00" stop-color="#001cf4"/></radialGradient><radialGradient id="f12" gradientUnits="userSpaceOnUse" cx="0" cy="0" r="1" gradientTransform="matrix(54.832 -42.890 66.651 35.284 760.38 578.25)"><stop offset="0.00" stop-color="#0000f4"/><stop offset="0.20" stop-color="#0005f4"/><stop offset="0.35" stop-color="#000af4"/><stop offset="0.50" stop-color="#000ff4"/><stop offset="0.62" stop-color="#0013f4"/><stop offset="0.74" stop-color="#0017f4"/><stop offset="0.86" stop-color="#001bf4"/><stop offset="1.00" stop-color="#001ff4"/></radialGradient><radialGradient id="f11" gradientUnits="userSpaceOnUse" cx="0" cy="0" r="1" gradientTransform="matrix(58.745 -41.808 64.969 37.802 760.67 570.21)"><stop offset="0.00" stop-color="#0000f4"/><stop offset="0.20" stop-color="#000af4"/><stop offset="0.35" stop-color="#0012f4"/><stop offset="0.50" stop-color="#001af4"/><stop offset="0.62" stop-color="#0021f4"/><stop offset="0.74" stop-color="#002af4"/><stop offset="0.86" stop-color="#0036f4"/><stop offset="1.00" stop-color="#0045f4"/></radialGradient><radialGradient id="f10" gradientUnits="userSpaceOnUse" cx="0" cy="0" r="1" gradientTransform="matrix(62.728 -40.545 63.008 40.365 761.08 562.07)"><stop offset="0.00" stop-color="#0000f4"/><stop offset="0.20" stop-color="#0017f4"/><stop offset="0.35" stop-color="#002cf4"/><stop offset="0.50" stop-color="#004ff4"/><stop offset="0.62" stop-color="#006bf4"/><stop offset="0.74" stop-color="#0087f4"/><stop offset="0.86" stop-color="#00a7f4"/><stop offset="1.00" stop-color="#00cef4"/></radialGradient><radialGradient id="f9" gradientUnits="userSpaceOnUse" cx="0" cy="0" r="1" gradientTransform="matrix(66.837 -40.034 62.213 43.010 761.58 552.99)"><stop offset="0.00" stop-color="#0000f4"/><stop offset="0.20" stop-color="#0024f4"/><stop offset="0.35" stop-color="#0059f4"/><stop offset="0.50" stop-color="#0090f4"/><stop offset="0.62" stop-color="#00c3f4"/><stop offset="0.74" stop-color="#00f4f2"/><stop offset="0.86" stop-color="#00f4bd"/><stop offset="1.00" stop-color="#02f27c"/></radialGradient><radialGradient id="f8" gradientUnits="userSpaceOnUse" cx="0" cy="0" r="1" gradientTransform="matrix(71.167 -40.012 62.178 45.796 762.24 543.14)"><stop offset="0.00" stop-color="#0000f4"/><stop offset="0.20" stop-color="#0034f4"/><stop offset="0.35" stop-color="#0078f4"/><stop offset="0.50" stop-color="#00c4f4"/><stop offset="0.62" stop-color="#00f4e5"/><stop offset="0.74" stop-color="#00f4a4"/><stop offset="0.86" stop-color="#08ee57"/><stop offset="1.00" stop-color="#2de90f"/></radialGradient><radialGradient id="f7" gradientUnits="userSpaceOnUse" cx="0" cy="0" r="1" gradientTransform="matrix(75.263 -39.476 61.345 48.432 763.10 533.51)"><stop offset="0.00" stop-color="#0000f4"/><stop offset="0.20" stop-color="#003cf4"/><stop offset="0.35" stop-color="#0085f4"/><stop offset="0.50" stop-color="#00daf4"/><stop offset="0.62" stop-color="#00f4c8"/><stop offset="0.74" stop-color="#02f27e"/><stop offset="0.86" stop-color="#10e826"/><stop offset="1.00" stop-color="#67f006"/></radialGradient><radialGradient id="f6" gradientUnits="userSpaceOnUse" cx="0" cy="0" r="1" gradientTransform="matrix(79.678 -38.640 60.047 51.273 764.41 523.70)"><stop offset="0.00" stop-color="#0000f4"/><stop offset="0.20" stop-color="#0043f4"/><stop offset="0.35" stop-color="#0094f4"/><stop offset="0.50" stop-color="#00f1f4"/><stop offset="0.62" stop-color="#00f4ac"/><stop offset="0.74" stop-color="#09ed54"/><stop offset="0.86" stop-color="#31e90e"/><stop offset="1.00" stop-color="#9ef400"/></radialGradient><radialGradient id="f5" gradientUnits="userSpaceOnUse" cx="0" cy="0" r="1" gradientTransform="matrix(84.257 -37.750 58.664 54.219 765.73 513.56)"><stop offset="0.00" stop-color="#0000f4"/><stop offset="0.20" stop-color="#004af4"/><stop offset="0.35" stop-color="#00a1f4"/><stop offset="0.50" stop-color="#00f4e4"/><stop offset="0.62" stop-color="#00f493"/><stop offset="0.74" stop-color="#0ee92f"/><stop offset="0.86" stop-color="#5cee07"/><stop offset="1.00" stop-color="#c7f400"/></radialGradient><radialGradient id="f4" gradientUnits="userSpaceOnUse" cx="0" cy="0" r="1" gradientTransform="matrix(89.005 -37.847 58.814 57.275 766.09 502.28)"><stop offset="0.00" stop-color="#0000f4"/><stop offset="0.20" stop-color="#0050f4"/><stop offset="0.35" stop-color="#00aff4"/><stop offset="0.50" stop-color="#00f4d0"/><stop offset="0.62" stop-color="#03f176"/><stop offset="0.74" stop-color="#1be711"/><stop offset="0.86" stop-color="#87f301"/><stop offset="1.00" stop-color="#eff400"/></radialGradient><radialGradient id="f3" gradientUnits="userSpaceOnUse" cx="0" cy="0" r="1" gradientTransform="matrix(93.941 -37.814 58.763 60.451 766.69 490.78)"><stop offset="0.00" stop-color="#0000f4"/><stop offset="0.20" stop-color="#0057f4"/><stop offset="0.35" stop-color="#00bdf4"/><stop offset="0.50" stop-color="#00f4bc"/><stop offset="0.62" stop-color="#08ee55"/><stop offset="0.74" stop-color="#42eb0b"/><stop offset="0.86" stop-color="#adf400"/><stop offset="1.00" stop-color="#f4d200"/></radialGradient><radialGradient id="f2" gradientUnits="userSpaceOnUse" cx="0" cy="0" r="1" gradientTransform="matrix(97.817 -38.966 60.554 62.945 765.59 478.46)"><stop offset="0.00" stop-color="#0000f4"/><stop offset="0.20" stop-color="#005ff4"/><stop offset="0.35" stop-color="#00ccf4"/><stop offset="0.50" stop-color="#00f4a6"/><stop offset="0.62" stop-color="#0eea34"/><stop offset="0.74" stop-color="#6af005"/><stop offset="0.86" stop-color="#d4f400"/><stop offset="1.00" stop-color="#f4a900"/></radialGradient><radialGradient id="f1" gradientUnits="userSpaceOnUse" cx="0" cy="0" r="1" gradientTransform="matrix(100.618 -39.690 61.679 64.748 763.91 466.67)"><stop offset="0.00" stop-color="#0000f4"/><stop offset="0.20" stop-color="#0065f4"/><stop offset="0.35" stop-color="#00d9f4"/><stop offset="0.50" stop-color="#00f492"/><stop offset="0.62" stop-color="#12e615"/><stop offset="0.74" stop-color="#8ff400"/><stop offset="0.86" stop-color="#f4f200"/><stop offset="1.00" stop-color="#f48500"/></radialGradient><radialGradient id="f0" gradientUnits="userSpaceOnUse" cx="0" cy="0" r="1" gradientTransform="matrix(103.201 -40.298 62.624 66.410 761.61 454.79)"><stop offset="0.00" stop-color="#0000f4"/><stop offset="0.20" stop-color="#006df4"/><stop offset="0.35" stop-color="#00e9f4"/><stop offset="0.50" stop-color="#03f176"/><stop offset="0.62" stop-color="#34ea0e"/><stop offset="0.74" stop-color="#b2f400"/><stop offset="0.86" stop-color="#f4cd00"/><stop offset="1.00" stop-color="#f45d00"/></radialGradient><radialGradient id="rf" gradientUnits="userSpaceOnUse" cx="0" cy="0" r="1" gradientTransform="matrix(105.713 -40.854 63.487 68.026 761.90 450.48)"><stop offset="0.00" stop-color="#0075f4"/><stop offset="0.20" stop-color="#00f4b5"/><stop offset="0.35" stop-color="#0dea37"/><stop offset="0.50" stop-color="#6bf005"/><stop offset="0.62" stop-color="#bdf400"/><stop offset="0.74" stop-color="#f4e400"/><stop offset="0.86" stop-color="#f4a400"/><stop offset="1.00" stop-color="#f45f00"/></radialGradient><radialGradient id="ph" gradientUnits="userSpaceOnUse" cx="0" cy="0" r="1" gradientTransform="matrix(72 -26 30 32 752 404)"><stop offset="0" stop-color="#0008e0"/><stop offset=".18" stop-color="#0040f0"/><stop offset=".34" stop-color="#00a0ff"/><stop offset=".5" stop-color="#00f0f0"/><stop offset=".68" stop-color="#00f080"/><stop offset=".85" stop-color="#10e020"/><stop offset="1" stop-color="#30e000"/></radialGradient><radialGradient id="ru" gradientUnits="userSpaceOnUse" cx="0" cy="0" r="1" gradientTransform="matrix(110.103 -41.735 64.855 70.851 752.58 426.74)"><stop offset="0.00" stop-color="#0000d1"/><stop offset="0.20" stop-color="#005ad1"/><stop offset="0.35" stop-color="#00d0d1"/><stop offset="0.50" stop-color="#08ca45"/><stop offset="0.62" stop-color="#62ce03"/><stop offset="0.74" stop-color="#d1cb00"/><stop offset="0.86" stop-color="#d16500"/><stop offset="1.00" stop-color="#c00800"/></radialGradient><radialGradient id="rlg" gradientUnits="userSpaceOnUse" cx="0" cy="0" r="1" gradientTransform="matrix(105.713 -40.854 63.487 68.026 755.61 448.56)"><stop offset="0.00" stop-color="#0000d1"/><stop offset="0.20" stop-color="#005ad1"/><stop offset="0.35" stop-color="#00d0d1"/><stop offset="0.50" stop-color="#08ca45"/><stop offset="0.62" stop-color="#62ce03"/><stop offset="0.74" stop-color="#d1cb00"/><stop offset="0.86" stop-color="#d16500"/><stop offset="1.00" stop-color="#c00800"/></radialGradient></defs><path d="M746.5 805.8L822.4 736L847.6 747.6L845.7 761L791.3 852.4L746.5 830Z" fill="#0000c8"/><path d="M750 806L822.4 736L847.6 747.6L795 838Z" fill="#0404ff"/><g stroke="#00009a" stroke-width="1.3" opacity=".85" fill="none"><path d="M762 811L832 740M776 819L840 744M786 826L846 752M760 796L806 818M770 786L816 806M782 775L826 793M794 764L834 780M806 752L840 766M815 743L846 756"/></g><path d="M746.5 811L791.3 838L791.3 852.4L746.5 830Z" fill="#0000b0"/><path d="M691.4 794L735 809.7L745.7 805.8L748.6 831L742.8 842.7L696 813.6Z" fill="url(#pdg2)"/><path d="M691.4 794L717.6 747.6L760 757L746.7 780.6L745.7 805.8L735 809.7Z" fill="url(#pdg)"/><g stroke="#10a858" stroke-width="1.4" fill="none" opacity=".9"><path d="M705 770L742 793M727 766L711 802M699 781L722 794M736 789L729 808M716 783L708 797"/></g><path d="M795.0 805.1L819.1 751.6L813.7 746.5L806.7 742.1L798.6 738.7L789.6 736.4L780.1 735.2L770.4 735.3L760.9 736.6L752.0 739.1L727.8 792.5L733.3 797.7L740.2 802.1L748.3 805.5L757.4 807.8L766.9 808.9L776.6 808.9L786.1 807.6Z" fill="url(#f43)"/><path d="M795.0 805.1L819.1 751.6L813.7 746.5L806.7 742.1L798.6 738.7L789.6 736.4L780.1 735.2L770.4 735.3L760.9 736.6L752.0 739.1L727.8 792.5L733.3 797.7L740.2 802.1L748.3 805.5L757.4 807.8L766.9 808.9L776.6 808.9L786.1 807.6Z" fill="#003a00" opacity=".33"/><path d="M795.0 802.9L819.1 749.5L813.7 744.3L806.7 739.9L798.6 736.5L789.6 734.2L780.1 733.0L770.4 733.1L760.9 734.4L752.0 736.9L727.8 790.3L733.3 795.5L740.2 799.9L748.3 803.3L757.4 805.6L766.9 806.8L776.6 806.7L786.1 805.4Z" fill="url(#f43)"/><path d="M795.1 800.9L819.5 747.2L814.1 742.0L807.1 737.6L799.0 734.1L789.9 731.8L780.3 730.6L770.6 730.7L761.0 732.0L752.1 734.5L727.6 788.2L733.1 793.4L740.0 797.8L748.2 801.2L757.2 803.6L766.8 804.7L776.6 804.6L786.1 803.3Z" fill="url(#f42)"/><path d="M795.1 800.9L819.5 747.2L814.1 742.0L807.1 737.6L799.0 734.1L789.9 731.8L780.3 730.6L770.6 730.7L761.0 732.0L752.1 734.5L727.6 788.2L733.1 793.4L740.0 797.8L748.2 801.2L757.2 803.6L766.8 804.7L776.6 804.6L786.1 803.3Z" fill="#003a00" opacity=".33"/><path d="M795.1 798.7L819.5 745.0L814.1 739.8L807.1 735.4L799.0 731.9L789.9 729.6L780.3 728.4L770.6 728.5L761.0 729.8L752.1 732.3L727.6 786.0L733.1 791.2L740.0 795.6L748.2 799.0L757.2 801.4L766.8 802.5L776.6 802.5L786.1 801.2Z" fill="url(#f42)"/><path d="M795.4 796.6L820.4 742.1L814.8 736.8L807.8 732.3L799.5 728.8L790.3 726.4L780.6 725.2L770.7 725.3L761.0 726.6L751.9 729.1L726.8 783.6L732.4 788.9L739.4 793.4L747.7 796.9L756.9 799.3L766.6 800.5L776.5 800.4L786.3 799.1Z" fill="url(#f41)"/><path d="M795.4 796.6L820.4 742.1L814.8 736.8L807.8 732.3L799.5 728.8L790.3 726.4L780.6 725.2L770.7 725.3L761.0 726.6L751.9 729.1L726.8 783.6L732.4 788.9L739.4 793.4L747.7 796.9L756.9 799.3L766.6 800.5L776.5 800.4L786.3 799.1Z" fill="#003a00" opacity=".33"/><path d="M795.4 794.4L820.4 739.9L814.8 734.6L807.8 730.1L799.5 726.6L790.3 724.2L780.6 723.0L770.7 723.0L761.0 724.3L751.9 726.8L726.8 781.4L732.4 786.7L739.4 791.2L747.7 794.7L756.9 797.1L766.6 798.3L776.5 798.2L786.3 796.9Z" fill="url(#f41)"/><path d="M795.7 792.3L821.3 736.9L815.7 731.5L808.5 727.0L800.1 723.4L790.8 720.9L780.9 719.7L770.8 719.7L760.9 721.1L751.7 723.6L726.0 779.0L731.6 784.4L738.8 789.0L747.2 792.5L756.5 795.0L766.4 796.2L776.5 796.2L786.4 794.9Z" fill="url(#f40)"/><path d="M795.7 792.3L821.3 736.9L815.7 731.5L808.5 727.0L800.1 723.4L790.8 720.9L780.9 719.7L770.8 719.7L760.9 721.1L751.7 723.6L726.0 779.0L731.6 784.4L738.8 789.0L747.2 792.5L756.5 795.0L766.4 796.2L776.5 796.2L786.4 794.9Z" fill="#003a00" opacity=".33"/><path d="M795.7 790.1L821.3 734.7L815.7 729.3L808.5 724.7L800.1 721.1L790.8 718.7L780.9 717.4L770.8 717.5L760.9 718.8L751.7 721.3L726.0 776.7L731.6 782.1L738.8 786.7L747.2 790.3L756.5 792.7L766.4 794.0L776.5 793.9L786.4 792.6Z" fill="url(#f40)"/><path d="M796.0 788.0L822.2 731.7L816.5 726.2L809.2 721.5L800.7 717.9L791.2 715.4L781.2 714.1L770.9 714.1L760.9 715.5L751.5 718.0L725.2 774.3L730.9 779.8L738.2 784.5L746.7 788.1L756.2 790.6L766.2 791.9L776.5 791.9L786.5 790.5Z" fill="url(#f39)"/><path d="M796.0 788.0L822.2 731.7L816.5 726.2L809.2 721.5L800.7 717.9L791.2 715.4L781.2 714.1L770.9 714.1L760.9 715.5L751.5 718.0L725.2 774.3L730.9 779.8L738.2 784.5L746.7 788.1L756.2 790.6L766.2 791.9L776.5 791.9L786.5 790.5Z" fill="#003a00" opacity=".33"/><path d="M796.0 785.7L822.2 729.4L816.5 723.9L809.2 719.3L800.7 715.6L791.2 713.1L781.2 711.8L770.9 711.9L760.9 713.2L751.5 715.7L725.2 772.0L730.9 777.5L738.2 782.2L746.7 785.8L756.2 788.3L766.2 789.6L776.5 789.6L786.5 788.2Z" fill="url(#f39)"/><path d="M796.3 783.5L823.1 726.4L817.3 720.8L810.0 716.0L801.3 712.3L791.7 709.8L781.5 708.5L771.1 708.5L760.9 709.8L751.3 712.4L724.4 769.6L730.2 775.1L737.5 779.9L746.2 783.6L755.8 786.2L766.0 787.5L776.4 787.5L786.6 786.1Z" fill="url(#f38)"/><path d="M796.3 783.5L823.1 726.4L817.3 720.8L810.0 716.0L801.3 712.3L791.7 709.8L781.5 708.5L771.1 708.5L760.9 709.8L751.3 712.4L724.4 769.6L730.2 775.1L737.5 779.9L746.2 783.6L755.8 786.2L766.0 787.5L776.4 787.5L786.6 786.1Z" fill="#003a00" opacity=".33"/><path d="M796.3 781.2L823.1 724.1L817.3 718.5L810.0 713.7L801.3 710.0L791.7 707.4L781.5 706.1L771.1 706.2L760.9 707.5L751.3 710.1L724.4 767.3L730.2 772.8L737.5 777.6L746.2 781.3L755.8 783.9L766.0 785.2L776.4 785.2L786.6 783.8Z" fill="url(#f38)"/><path d="M796.6 779.1L824.1 721.0L818.2 715.3L810.8 710.5L802.0 706.7L792.2 704.1L781.8 702.7L771.2 702.7L760.9 704.1L751.1 706.7L723.6 764.8L729.4 770.4L736.9 775.3L745.7 779.1L755.4 781.7L765.8 783.0L776.4 783.0L786.8 781.7Z" fill="url(#f37)"/><path d="M796.6 779.1L824.1 721.0L818.2 715.3L810.8 710.5L802.0 706.7L792.2 704.1L781.8 702.7L771.2 702.7L760.9 704.1L751.1 706.7L723.6 764.8L729.4 770.4L736.9 775.3L745.7 779.1L755.4 781.7L765.8 783.0L776.4 783.0L786.8 781.7Z" fill="#003a00" opacity=".33"/><path d="M796.6 776.7L824.1 718.7L818.2 713.0L810.8 708.1L802.0 704.3L792.2 701.7L781.8 700.4L771.2 700.4L760.9 701.7L751.1 704.3L723.6 762.4L729.4 768.1L736.9 772.9L745.7 776.7L755.4 779.3L765.8 780.7L776.4 780.7L786.8 779.3Z" fill="url(#f37)"/><path d="M796.9 774.5L825.0 715.5L819.1 709.8L811.5 704.8L802.6 701.0L792.7 698.3L782.2 696.9L771.4 696.9L760.8 698.2L750.9 700.9L722.7 759.9L728.7 765.7L736.2 770.6L745.1 774.5L755.1 777.1L765.6 778.5L776.4 778.5L786.9 777.2Z" fill="url(#f36)"/><path d="M796.9 774.5L825.0 715.5L819.1 709.8L811.5 704.8L802.6 701.0L792.7 698.3L782.2 696.9L771.4 696.9L760.8 698.2L750.9 700.9L722.7 759.9L728.7 765.7L736.2 770.6L745.1 774.5L755.1 777.1L765.6 778.5L776.4 778.5L786.9 777.2Z" fill="#003a00" opacity=".33"/><path d="M796.9 772.1L825.0 713.2L819.1 707.4L811.5 702.5L802.6 698.6L792.7 695.9L782.2 694.5L771.4 694.5L760.8 695.9L750.9 698.5L722.7 757.5L728.7 763.3L736.2 768.2L745.1 772.1L755.1 774.8L765.6 776.1L776.4 776.1L786.9 774.8Z" fill="url(#f36)"/><path d="M796.8 769.9L825.6 710.0L819.6 704.1L811.9 699.1L802.9 695.2L792.8 692.4L782.1 691.0L771.2 691.0L760.4 692.3L750.3 695.0L721.5 754.9L727.5 760.8L735.1 765.8L744.2 769.8L754.3 772.5L765.0 773.9L775.9 774.0L786.6 772.6Z" fill="url(#f35)"/><path d="M796.8 769.9L825.6 710.0L819.6 704.1L811.9 699.1L802.9 695.2L792.8 692.4L782.1 691.0L771.2 691.0L760.4 692.3L750.3 695.0L721.5 754.9L727.5 760.8L735.1 765.8L744.2 769.8L754.3 772.5L765.0 773.9L775.9 774.0L786.6 772.6Z" fill="#003a00" opacity=".33"/><path d="M796.8 767.5L825.6 707.6L819.6 701.7L811.9 696.7L802.9 692.8L792.8 690.0L782.1 688.6L771.2 688.6L760.4 689.9L750.3 692.6L721.5 752.5L727.5 758.4L735.1 763.4L744.2 767.4L754.3 770.1L765.0 771.5L775.9 771.5L786.6 770.2Z" fill="url(#f35)"/><path d="M796.3 765.3L825.8 704.4L819.7 698.4L812.0 693.3L802.8 689.3L792.6 686.5L781.7 685.1L770.6 685.0L759.7 686.4L749.4 689.1L719.8 749.9L725.9 755.9L733.7 761.0L742.9 765.0L753.1 767.8L764.0 769.3L775.1 769.3L786.0 768.0Z" fill="url(#f34)"/><path d="M796.3 765.3L825.8 704.4L819.7 698.4L812.0 693.3L802.8 689.3L792.6 686.5L781.7 685.1L770.6 685.0L759.7 686.4L749.4 689.1L719.8 749.9L725.9 755.9L733.7 761.0L742.9 765.0L753.1 767.8L764.0 769.3L775.1 769.3L786.0 768.0Z" fill="#003a00" opacity=".33"/><path d="M796.3 762.8L825.8 702.0L819.7 696.0L812.0 690.9L802.8 686.9L792.6 684.1L781.7 682.6L770.6 682.6L759.7 683.9L749.4 686.6L719.8 747.5L725.9 753.4L733.7 758.6L742.9 762.6L753.1 765.4L764.0 766.8L775.1 766.9L786.0 765.5Z" fill="url(#f34)"/><path d="M795.8 760.5L826.0 698.8L819.9 692.7L812.0 687.5L802.7 683.4L792.3 680.5L781.3 679.0L770.0 678.9L758.9 680.3L748.4 683.0L718.2 744.8L724.3 750.9L732.2 756.1L741.5 760.2L751.9 763.1L763.0 764.6L774.2 764.6L785.3 763.3Z" fill="url(#f33)"/><path d="M795.8 760.5L826.0 698.8L819.9 692.7L812.0 687.5L802.7 683.4L792.3 680.5L781.3 679.0L770.0 678.9L758.9 680.3L748.4 683.0L718.2 744.8L724.3 750.9L732.2 756.1L741.5 760.2L751.9 763.1L763.0 764.6L774.2 764.6L785.3 763.3Z" fill="#003a00" opacity=".33"/><path d="M795.8 758.1L826.0 696.3L819.9 690.2L812.0 685.0L802.7 680.9L792.3 678.0L781.3 676.5L770.0 676.5L758.9 677.8L748.4 680.6L718.2 742.3L724.3 748.4L732.2 753.6L741.5 757.7L751.9 760.6L763.0 762.1L774.2 762.2L785.3 760.8Z" fill="url(#f33)"/><path d="M795.3 755.7L826.3 693.0L820.1 686.8L812.1 681.5L802.6 677.3L792.1 674.4L780.9 672.9L769.4 672.8L758.1 674.2L747.5 676.9L716.5 739.6L722.7 745.8L730.7 751.1L740.2 755.3L750.7 758.3L761.9 759.8L773.4 759.9L784.7 758.5Z" fill="url(#f32)"/><path d="M795.3 755.7L826.3 693.0L820.1 686.8L812.1 681.5L802.6 677.3L792.1 674.4L780.9 672.9L769.4 672.8L758.1 674.2L747.5 676.9L716.5 739.6L722.7 745.8L730.7 751.1L740.2 755.3L750.7 758.3L761.9 759.8L773.4 759.9L784.7 758.5Z" fill="#003a00" opacity=".33"/><path d="M795.3 753.2L826.3 690.5L820.1 684.3L812.1 679.0L802.6 674.8L792.1 671.9L780.9 670.4L769.4 670.3L758.1 671.7L747.5 674.4L716.5 737.1L722.7 743.3L730.7 748.6L740.2 752.8L750.7 755.7L761.9 757.3L773.4 757.4L784.7 756.0Z" fill="url(#f32)"/><path d="M794.8 750.9L826.5 687.2L820.2 680.9L812.1 675.5L802.6 671.2L791.9 668.2L780.5 666.7L768.8 666.6L757.3 667.9L746.5 670.7L714.8 734.4L721.1 740.7L729.2 746.1L738.8 750.4L749.5 753.4L760.9 754.9L772.5 755.0L784.0 753.7Z" fill="url(#f31)"/><path d="M794.8 750.9L826.5 687.2L820.2 680.9L812.1 675.5L802.6 671.2L791.9 668.2L780.5 666.7L768.8 666.6L757.3 667.9L746.5 670.7L714.8 734.4L721.1 740.7L729.2 746.1L738.8 750.4L749.5 753.4L760.9 754.9L772.5 755.0L784.0 753.7Z" fill="#003a00" opacity=".33"/><path d="M794.8 748.3L826.5 684.7L820.2 678.4L812.1 673.0L802.6 668.7L791.9 665.7L780.5 664.1L768.8 664.0L757.3 665.4L746.5 668.2L714.8 731.9L721.1 738.2L729.2 743.6L738.8 747.8L749.5 750.8L760.9 752.4L772.5 752.5L784.0 751.1Z" fill="url(#f31)"/><path d="M794.3 746.0L826.8 681.3L820.4 674.9L812.2 669.4L802.5 665.0L791.6 662.0L780.1 660.4L768.2 660.2L756.6 661.6L745.5 664.4L713.1 729.1L719.5 735.5L727.7 741.0L737.4 745.4L748.2 748.4L759.8 750.0L771.7 750.2L783.3 748.8Z" fill="url(#f30)"/><path d="M794.3 746.0L826.8 681.3L820.4 674.9L812.2 669.4L802.5 665.0L791.6 662.0L780.1 660.4L768.2 660.2L756.6 661.6L745.5 664.4L713.1 729.1L719.5 735.5L727.7 741.0L737.4 745.4L748.2 748.4L759.8 750.0L771.7 750.2L783.3 748.8Z" fill="#003a00" opacity=".33"/><path d="M794.3 743.4L826.8 678.7L820.4 672.3L812.2 666.8L802.5 662.5L791.6 659.4L780.1 657.8L768.2 657.7L756.6 659.0L745.5 661.9L713.1 726.5L719.5 732.9L727.7 738.4L737.4 742.8L748.2 745.8L759.8 747.5L771.7 747.6L783.3 746.2Z" fill="url(#f30)"/><path d="M793.5 741.0L826.9 675.7L820.6 669.2L812.3 663.6L802.5 659.1L791.6 656.0L779.9 654.3L767.9 654.2L756.1 655.5L744.9 658.3L711.5 723.6L717.9 730.1L726.1 735.7L735.9 740.1L746.9 743.3L758.6 745.0L770.5 745.1L782.3 743.8Z" fill="url(#f29)"/><path d="M793.5 741.0L826.9 675.7L820.6 669.2L812.3 663.6L802.5 659.1L791.6 656.0L779.9 654.3L767.9 654.2L756.1 655.5L744.9 658.3L711.5 723.6L717.9 730.1L726.1 735.7L735.9 740.1L746.9 743.3L758.6 745.0L770.5 745.1L782.3 743.8Z" fill="#003a00" opacity=".33"/><path d="M793.5 738.4L826.9 673.1L820.6 666.6L812.3 661.0L802.5 656.5L791.6 653.4L779.9 651.7L767.9 651.5L756.1 652.9L744.9 655.7L711.5 721.0L717.9 727.5L726.1 733.1L735.9 737.5L746.9 740.7L758.6 742.3L770.5 742.5L782.3 741.2Z" fill="url(#f29)"/><path d="M792.0 735.9L826.8 670.8L820.6 664.2L812.4 658.5L802.7 654.0L791.8 650.7L780.1 649.0L768.1 648.7L756.3 649.9L745.0 652.6L710.1 717.8L716.4 724.4L724.5 730.0L734.3 734.6L745.2 737.8L756.9 739.6L768.9 739.9L780.7 738.6Z" fill="url(#f28)"/><path d="M792.0 735.9L826.8 670.8L820.6 664.2L812.4 658.5L802.7 654.0L791.8 650.7L780.1 649.0L768.1 648.7L756.3 649.9L745.0 652.6L710.1 717.8L716.4 724.4L724.5 730.0L734.3 734.6L745.2 737.8L756.9 739.6L768.9 739.9L780.7 738.6Z" fill="#003a00" opacity=".33"/><path d="M792.0 733.2L826.8 668.1L820.6 661.5L812.4 655.8L802.7 651.3L791.8 648.1L780.1 646.3L768.1 646.0L756.3 647.3L745.0 650.0L710.1 715.1L716.4 721.7L724.5 727.4L734.3 731.9L745.2 735.1L756.9 736.9L768.9 737.2L780.7 735.9Z" fill="url(#f28)"/><path d="M790.4 730.7L826.7 665.8L820.6 659.1L812.6 653.3L802.9 648.7L792.0 645.4L780.4 643.5L768.4 643.1L756.4 644.2L745.1 646.9L708.8 711.8L714.9 718.5L723.0 724.2L732.6 728.9L743.5 732.2L755.1 734.1L767.2 734.5L779.1 733.3Z" fill="url(#f27)"/><path d="M790.4 730.7L826.7 665.8L820.6 659.1L812.6 653.3L802.9 648.7L792.0 645.4L780.4 643.5L768.4 643.1L756.4 644.2L745.1 646.9L708.8 711.8L714.9 718.5L723.0 724.2L732.6 728.9L743.5 732.2L755.1 734.1L767.2 734.5L779.1 733.3Z" fill="#003a00" opacity=".33"/><path d="M790.4 728.0L826.7 663.1L820.6 656.4L812.6 650.6L802.9 646.0L792.0 642.7L780.4 640.8L768.4 640.4L756.4 641.5L745.1 644.2L708.8 709.1L714.9 715.8L723.0 721.5L732.6 726.2L743.5 729.5L755.1 731.4L767.2 731.8L779.1 730.6Z" fill="url(#f27)"/><path d="M788.8 725.5L826.6 660.7L820.6 654.0L812.7 648.1L803.1 643.4L792.3 639.9L780.6 637.9L768.6 637.4L756.6 638.5L745.2 641.0L707.4 705.8L713.4 712.5L721.4 718.4L730.9 723.1L741.7 726.5L753.4 728.5L765.4 729.0L777.4 728.0Z" fill="url(#f26)"/><path d="M788.8 725.5L826.6 660.7L820.6 654.0L812.7 648.1L803.1 643.4L792.3 639.9L780.6 637.9L768.6 637.4L756.6 638.5L745.2 641.0L707.4 705.8L713.4 712.5L721.4 718.4L730.9 723.1L741.7 726.5L753.4 728.5L765.4 729.0L777.4 728.0Z" fill="#003a00" opacity=".33"/><path d="M788.8 722.7L826.6 657.9L820.6 651.2L812.7 645.3L803.1 640.6L792.3 637.2L780.6 635.2L768.6 634.7L756.6 635.7L745.2 638.2L707.4 703.0L713.4 709.7L721.4 715.6L730.9 720.3L741.7 723.8L753.4 725.8L765.4 726.2L777.4 725.2Z" fill="url(#f26)"/><path d="M787.2 720.1L826.5 655.5L820.7 648.7L812.8 642.8L803.3 637.9L792.6 634.4L780.9 632.3L768.9 631.7L756.9 632.6L745.4 635.0L706.0 699.6L711.9 706.4L719.7 712.3L729.2 717.2L740.0 720.7L751.6 722.8L763.7 723.4L775.7 722.5Z" fill="url(#f25)"/><path d="M787.2 720.1L826.5 655.5L820.7 648.7L812.8 642.8L803.3 637.9L792.6 634.4L780.9 632.3L768.9 631.7L756.9 632.6L745.4 635.0L706.0 699.6L711.9 706.4L719.7 712.3L729.2 717.2L740.0 720.7L751.6 722.8L763.7 723.4L775.7 722.5Z" fill="#003a00" opacity=".33"/><path d="M787.2 717.3L826.5 652.7L820.7 645.9L812.8 640.0L803.3 635.1L792.6 631.6L780.9 629.5L768.9 628.9L756.9 629.8L745.4 632.2L706.0 696.8L711.9 703.6L719.7 709.5L729.2 714.4L740.0 717.9L751.6 720.0L763.7 720.6L775.7 719.7Z" fill="url(#f25)"/><path d="M785.5 714.6L826.4 650.3L820.7 643.4L813.0 637.4L803.6 632.4L792.9 628.8L781.2 626.6L769.2 625.8L757.1 626.7L745.5 629.0L704.7 693.3L710.4 700.2L718.1 706.2L727.5 711.2L738.2 714.8L749.8 717.0L761.9 717.7L773.9 716.9Z" fill="url(#f24)"/><path d="M785.5 714.6L826.4 650.3L820.7 643.4L813.0 637.4L803.6 632.4L792.9 628.8L781.2 626.6L769.2 625.8L757.1 626.7L745.5 629.0L704.7 693.3L710.4 700.2L718.1 706.2L727.5 711.2L738.2 714.8L749.8 717.0L761.9 717.7L773.9 716.9Z" fill="#003a00" opacity=".33"/><path d="M785.5 711.7L826.4 647.4L820.7 640.5L813.0 634.5L803.6 629.6L792.9 625.9L781.2 623.7L769.2 623.0L757.1 623.8L745.5 626.1L704.7 690.5L710.4 697.3L718.1 703.3L727.5 708.3L738.2 711.9L749.8 714.2L761.9 714.9L773.9 714.1Z" fill="url(#f24)"/><path d="M783.8 709.0L826.3 644.9L820.7 638.0L813.1 631.9L803.8 626.8L793.2 623.1L781.6 620.7L769.5 619.9L757.4 620.6L745.7 622.8L703.3 686.9L708.9 693.9L716.4 700.0L725.7 705.0L736.4 708.8L748.0 711.1L760.1 712.0L772.2 711.2Z" fill="url(#f23)"/><path d="M783.8 709.0L826.3 644.9L820.7 638.0L813.1 631.9L803.8 626.8L793.2 623.1L781.6 620.7L769.5 619.9L757.4 620.6L745.7 622.8L703.3 686.9L708.9 693.9L716.4 700.0L725.7 705.0L736.4 708.8L748.0 711.1L760.1 712.0L772.2 711.2Z" fill="#003a00" opacity=".33"/><path d="M783.8 706.1L826.3 642.0L820.7 635.0L813.1 628.9L803.8 623.9L793.2 620.1L781.6 617.8L769.5 617.0L757.4 617.7L745.7 619.9L703.3 684.0L708.9 690.9L716.4 697.1L725.7 702.1L736.4 705.8L748.0 708.2L760.1 709.0L772.2 708.3Z" fill="url(#f23)"/><path d="M782.1 703.3L826.2 639.5L820.7 632.5L813.3 626.3L804.1 621.2L793.5 617.3L781.9 614.8L769.8 613.9L757.7 614.5L745.9 616.6L701.9 680.4L707.3 687.4L714.8 693.6L724.0 698.8L734.6 702.6L746.1 705.1L758.2 706.0L770.4 705.4Z" fill="url(#f22)"/><path d="M782.1 703.3L826.2 639.5L820.7 632.5L813.3 626.3L804.1 621.2L793.5 617.3L781.9 614.8L769.8 613.9L757.7 614.5L745.9 616.6L701.9 680.4L707.3 687.4L714.8 693.6L724.0 698.8L734.6 702.6L746.1 705.1L758.2 706.0L770.4 705.4Z" fill="#003a00" opacity=".33"/><path d="M782.1 700.3L826.2 636.5L820.7 629.5L813.3 623.3L804.1 618.2L793.5 614.3L781.9 611.8L769.8 610.9L757.7 611.5L745.9 613.6L701.9 677.4L707.3 684.4L714.8 690.6L724.0 695.8L734.6 699.6L746.1 702.1L758.2 703.1L770.4 702.5Z" fill="url(#f22)"/><path d="M780.1 697.5L826.6 633.7L821.3 626.5L814.0 620.2L804.8 614.9L794.3 610.8L782.7 608.2L770.5 607.1L758.2 607.5L746.3 609.5L699.8 673.4L705.1 680.5L712.4 686.9L721.6 692.2L732.1 696.2L743.7 698.8L755.9 700.0L768.2 699.5Z" fill="url(#f21)"/><path d="M780.1 697.5L826.6 633.7L821.3 626.5L814.0 620.2L804.8 614.9L794.3 610.8L782.7 608.2L770.5 607.1L758.2 607.5L746.3 609.5L699.8 673.4L705.1 680.5L712.4 686.9L721.6 692.2L732.1 696.2L743.7 698.8L755.9 700.0L768.2 699.5Z" fill="#003a00" opacity=".33"/><path d="M780.1 694.5L826.6 630.6L821.3 623.5L814.0 617.1L804.8 611.8L794.3 607.8L782.7 605.2L770.5 604.0L758.2 604.5L746.3 606.5L699.8 670.3L705.1 677.5L712.4 683.8L721.6 689.1L732.1 693.2L743.7 695.8L755.9 696.9L768.2 696.5Z" fill="url(#f21)"/><path d="M778.0 691.6L827.0 627.8L821.9 620.5L814.7 614.0L805.7 608.5L795.2 604.3L783.5 601.5L771.3 600.2L758.9 600.4L746.8 602.3L697.7 666.1L702.8 673.4L710.0 679.9L719.1 685.4L729.6 689.6L741.2 692.5L753.5 693.7L765.9 693.5Z" fill="url(#f20)"/><path d="M778.0 691.6L827.0 627.8L821.9 620.5L814.7 614.0L805.7 608.5L795.2 604.3L783.5 601.5L771.3 600.2L758.9 600.4L746.8 602.3L697.7 666.1L702.8 673.4L710.0 679.9L719.1 685.4L729.6 689.6L741.2 692.5L753.5 693.7L765.9 693.5Z" fill="#003a00" opacity=".33"/><path d="M778.0 688.5L827.0 624.7L821.9 617.4L814.7 610.9L805.7 605.4L795.2 601.2L783.5 598.4L771.3 597.1L758.9 597.3L746.8 599.2L697.7 663.0L702.8 670.3L710.0 676.8L719.1 682.3L729.6 686.5L741.2 689.3L753.5 690.6L765.9 690.4Z" fill="url(#f20)"/><path d="M775.9 685.6L827.5 621.8L822.6 614.4L815.6 607.7L806.6 602.0L796.1 597.6L784.5 594.6L772.1 593.1L759.6 593.3L747.3 594.9L695.7 658.7L700.6 666.2L707.6 672.9L716.6 678.5L727.1 682.9L738.7 685.9L751.0 687.4L763.6 687.3Z" fill="url(#f19)"/><path d="M775.9 685.6L827.5 621.8L822.6 614.4L815.6 607.7L806.6 602.0L796.1 597.6L784.5 594.6L772.1 593.1L759.6 593.3L747.3 594.9L695.7 658.7L700.6 666.2L707.6 672.9L716.6 678.5L727.1 682.9L738.7 685.9L751.0 687.4L763.6 687.3Z" fill="#003a00" opacity=".33"/><path d="M775.9 682.5L827.5 618.6L822.6 611.2L815.6 604.5L806.6 598.9L796.1 594.5L784.5 591.5L772.1 590.0L759.6 590.1L747.3 591.8L695.7 655.6L700.6 663.0L707.6 669.7L716.6 675.3L727.1 679.8L738.7 682.8L751.0 684.2L763.6 684.1Z" fill="url(#f19)"/><path d="M773.7 679.5L828.0 615.8L823.3 608.2L816.4 601.3L807.6 595.5L797.1 590.9L785.5 587.7L773.1 586.0L760.4 586.0L747.9 587.5L693.6 651.2L698.3 658.8L705.2 665.6L714.0 671.5L724.5 676.1L736.2 679.3L748.6 680.9L761.2 681.0Z" fill="url(#f18)"/><path d="M773.7 679.5L828.0 615.8L823.3 608.2L816.4 601.3L807.6 595.5L797.1 590.9L785.5 587.7L773.1 586.0L760.4 586.0L747.9 587.5L693.6 651.2L698.3 658.8L705.2 665.6L714.0 671.5L724.5 676.1L736.2 679.3L748.6 680.9L761.2 681.0Z" fill="#003a00" opacity=".33"/><path d="M773.7 676.3L828.0 612.5L823.3 605.0L816.4 598.1L807.6 592.3L797.1 587.7L785.5 584.5L773.1 582.8L760.4 582.7L747.9 584.3L693.6 648.0L698.3 655.6L705.2 662.4L714.0 668.2L724.5 672.9L736.2 676.1L748.6 677.7L761.2 677.8Z" fill="url(#f18)"/><path d="M771.5 673.2L828.5 609.7L824.1 601.9L817.4 594.9L808.6 588.9L798.2 584.1L786.5 580.7L774.1 578.8L761.3 578.6L748.7 580.0L691.6 643.5L696.0 651.3L702.8 658.3L711.5 664.3L721.9 669.1L733.6 672.5L746.1 674.3L758.9 674.6Z" fill="url(#f17)"/><path d="M771.5 673.2L828.5 609.7L824.1 601.9L817.4 594.9L808.6 588.9L798.2 584.1L786.5 580.7L774.1 578.8L761.3 578.6L748.7 580.0L691.6 643.5L696.0 651.3L702.8 658.3L711.5 664.3L721.9 669.1L733.6 672.5L746.1 674.3L758.9 674.6Z" fill="#003a00" opacity=".33"/><path d="M771.5 669.9L828.5 606.4L824.1 598.6L817.4 591.6L808.6 585.6L798.2 580.8L786.5 577.4L774.1 575.6L761.3 575.3L748.7 576.7L691.6 640.2L696.0 648.0L702.8 655.0L711.5 661.0L721.9 665.8L733.6 669.2L746.1 671.1L758.9 671.3Z" fill="url(#f17)"/><path d="M769.2 666.9L829.1 603.5L824.9 595.6L818.3 588.4L809.7 582.2L799.4 577.2L787.7 573.6L775.2 571.5L762.3 571.1L749.5 572.3L689.6 635.7L693.8 643.6L700.4 650.7L709.0 656.9L719.3 662.0L731.0 665.6L743.5 667.6L756.4 668.1Z" fill="url(#f16)"/><path d="M769.2 666.9L829.1 603.5L824.9 595.6L818.3 588.4L809.7 582.2L799.4 577.2L787.7 573.6L775.2 571.5L762.3 571.1L749.5 572.3L689.6 635.7L693.8 643.6L700.4 650.7L709.0 656.9L719.3 662.0L731.0 665.6L743.5 667.6L756.4 668.1Z" fill="#003a00" opacity=".33"/><path d="M769.2 663.5L829.1 600.1L824.9 592.3L818.3 585.1L809.7 578.9L799.4 573.9L787.7 570.3L775.2 568.2L762.3 567.8L749.5 569.0L689.6 632.3L693.8 640.2L700.4 647.4L709.0 653.6L719.3 658.6L731.0 662.2L743.5 664.3L756.4 664.7Z" fill="url(#f16)"/><path d="M766.6 660.3L830.2 597.1L826.3 589.1L820.0 581.7L811.5 575.2L801.2 569.9L789.5 566.0L776.9 563.7L763.8 563.0L750.8 564.0L687.2 627.2L691.1 635.3L697.4 642.7L705.9 649.2L716.2 654.4L727.8 658.3L740.5 660.6L753.6 661.3Z" fill="url(#f15)"/><path d="M766.6 660.3L830.2 597.1L826.3 589.1L820.0 581.7L811.5 575.2L801.2 569.9L789.5 566.0L776.9 563.7L763.8 563.0L750.8 564.0L687.2 627.2L691.1 635.3L697.4 642.7L705.9 649.2L716.2 654.4L727.8 658.3L740.5 660.6L753.6 661.3Z" fill="#003a00" opacity=".33"/><path d="M766.6 656.9L830.2 593.7L826.3 585.6L820.0 578.2L811.5 571.8L801.2 566.5L789.5 562.6L776.9 560.3L763.8 559.6L750.8 560.6L687.2 623.8L691.1 631.9L697.4 639.3L705.9 645.8L716.2 651.0L727.8 654.9L740.5 657.2L753.6 657.9Z" fill="url(#f15)"/><path d="M763.6 653.7L832.1 590.6L828.5 582.3L822.4 574.6L814.2 567.8L804.0 562.2L792.3 558.0L779.5 555.3L766.2 554.3L752.8 555.0L684.3 618.0L687.9 626.4L694.0 634.1L702.2 640.9L712.4 646.5L724.1 650.7L736.9 653.4L750.2 654.4Z" fill="url(#f14)"/><path d="M763.6 653.7L832.1 590.6L828.5 582.3L822.4 574.6L814.2 567.8L804.0 562.2L792.3 558.0L779.5 555.3L766.2 554.3L752.8 555.0L684.3 618.0L687.9 626.4L694.0 634.1L702.2 640.9L712.4 646.5L724.1 650.7L736.9 653.4L750.2 654.4Z" fill="#003a00" opacity=".33"/><path d="M763.6 650.2L832.1 587.1L828.5 578.8L822.4 571.1L814.2 564.3L804.0 558.7L792.3 554.4L779.5 551.8L766.2 550.8L752.8 551.5L684.3 614.5L687.9 622.8L694.0 630.5L702.2 637.3L712.4 643.0L724.1 647.2L736.9 649.8L750.2 650.9Z" fill="url(#f14)"/><path d="M760.4 646.8L834.0 584.1L830.8 575.5L825.1 567.5L817.0 560.4L807.0 554.4L795.3 549.8L782.4 546.8L768.9 545.4L755.2 545.8L681.6 608.5L684.8 617.1L690.5 625.1L698.6 632.3L708.6 638.2L720.3 642.8L733.2 645.9L746.7 647.2Z" fill="url(#f13)"/><path d="M760.4 646.8L834.0 584.1L830.8 575.5L825.1 567.5L817.0 560.4L807.0 554.4L795.3 549.8L782.4 546.8L768.9 545.4L755.2 545.8L681.6 608.5L684.8 617.1L690.5 625.1L698.6 632.3L708.6 638.2L720.3 642.8L733.2 645.9L746.7 647.2Z" fill="#003a00" opacity=".33"/><path d="M760.4 643.2L834.0 580.5L830.8 571.9L825.1 563.9L817.0 556.7L807.0 550.8L795.3 546.2L782.4 543.1L768.9 541.8L755.2 542.2L681.6 604.9L684.8 613.5L690.5 621.5L698.6 628.6L708.6 634.6L720.3 639.2L733.2 642.2L746.7 643.6Z" fill="url(#f13)"/><path d="M756.8 639.8L835.8 578.0L833.1 569.2L827.8 560.9L820.1 553.4L810.3 547.0L798.7 542.1L785.8 538.6L772.1 536.9L758.2 536.9L679.2 598.7L681.9 607.5L687.2 615.8L694.9 623.3L704.7 629.6L716.3 634.6L729.2 638.0L742.9 639.8Z" fill="url(#f12)"/><path d="M756.8 639.8L835.8 578.0L833.1 569.2L827.8 560.9L820.1 553.4L810.3 547.0L798.7 542.1L785.8 538.6L772.1 536.9L758.2 536.9L679.2 598.7L681.9 607.5L687.2 615.8L694.9 623.3L704.7 629.6L716.3 634.6L729.2 638.0L742.9 639.8Z" fill="#003a00" opacity=".33"/><path d="M756.8 636.0L835.8 574.3L833.1 565.5L827.8 557.2L820.1 549.7L810.3 543.3L798.7 538.3L785.8 534.9L772.1 533.2L758.2 533.2L679.2 594.9L681.9 603.8L687.2 612.1L694.9 619.5L704.7 625.9L716.3 630.9L729.2 634.3L742.9 636.1Z" fill="url(#f12)"/><path d="M752.8 632.5L837.4 572.3L835.4 563.3L830.6 554.7L823.3 546.9L813.8 540.1L802.4 534.7L789.6 530.9L775.9 528.7L761.8 528.3L677.2 588.5L679.2 597.5L684.0 606.1L691.2 613.9L700.7 620.6L712.1 626.0L724.9 629.9L738.7 632.1Z" fill="url(#f11)"/><path d="M752.8 632.5L837.4 572.3L835.4 563.3L830.6 554.7L823.3 546.9L813.8 540.1L802.4 534.7L789.6 530.9L775.9 528.7L761.8 528.3L677.2 588.5L679.2 597.5L684.0 606.1L691.2 613.9L700.7 620.6L712.1 626.0L724.9 629.9L738.7 632.1Z" fill="#003a00" opacity=".33"/><path d="M752.8 628.7L837.4 568.5L835.4 559.5L830.6 550.9L823.3 543.1L813.8 536.3L802.4 530.9L789.6 527.0L775.9 524.9L761.8 524.5L677.2 584.7L679.2 593.7L684.0 602.2L691.2 610.1L700.7 616.8L712.1 622.2L724.9 626.1L738.7 628.3Z" fill="url(#f11)"/><path d="M748.7 625.0L839.0 566.7L837.6 557.5L833.5 548.6L826.7 540.5L817.5 533.3L806.4 527.5L793.7 523.1L780.0 520.5L765.6 519.7L675.3 578.0L676.7 587.2L680.9 596.1L687.7 604.2L696.8 611.4L707.9 617.2L720.6 621.5L734.4 624.2Z" fill="url(#f10)"/><path d="M748.7 625.0L839.0 566.7L837.6 557.5L833.5 548.6L826.7 540.5L817.5 533.3L806.4 527.5L793.7 523.1L780.0 520.5L765.6 519.7L675.3 578.0L676.7 587.2L680.9 596.1L687.7 604.2L696.8 611.4L707.9 617.2L720.6 621.5L734.4 624.2Z" fill="#003a00" opacity=".33"/><path d="M748.7 621.1L839.0 562.7L837.6 553.5L833.5 544.7L826.7 536.5L817.5 529.4L806.4 523.5L793.7 519.2L780.0 516.6L765.6 515.7L675.3 574.1L676.7 583.3L680.9 592.1L687.7 600.3L696.8 607.4L707.9 613.3L720.6 617.6L734.4 620.2Z" fill="url(#f10)"/><path d="M745.3 617.3L841.5 559.7L840.7 550.2L836.9 541.0L830.5 532.5L821.5 524.9L810.4 518.7L797.7 513.9L783.7 510.8L769.1 509.6L672.8 567.3L673.7 576.7L677.4 585.9L683.9 594.5L692.8 602.0L703.9 608.3L716.7 613.0L730.6 616.1Z" fill="url(#f9)"/><path d="M745.3 617.3L841.5 559.7L840.7 550.2L836.9 541.0L830.5 532.5L821.5 524.9L810.4 518.7L797.7 513.9L783.7 510.8L769.1 509.6L672.8 567.3L673.7 576.7L677.4 585.9L683.9 594.5L692.8 602.0L703.9 608.3L716.7 613.0L730.6 616.1Z" fill="#003a00" opacity=".33"/><path d="M745.3 613.3L841.5 555.6L840.7 546.1L836.9 537.0L830.5 528.4L821.5 520.9L810.4 514.6L797.7 509.8L783.7 506.8L769.1 505.5L672.8 563.2L673.7 572.7L677.4 581.8L683.9 590.4L692.8 597.9L703.9 604.2L716.7 609.0L730.6 612.0Z" fill="url(#f9)"/><path d="M742.3 609.4L844.8 551.8L844.4 541.9L841.0 532.3L834.7 523.4L825.9 515.4L814.7 508.7L801.8 503.5L787.5 500.0L772.4 498.4L669.9 556.0L670.3 565.9L673.7 575.4L680.0 584.4L688.9 592.4L700.0 599.1L713.0 604.3L727.3 607.8Z" fill="url(#f8)"/><path d="M742.3 609.4L844.8 551.8L844.4 541.9L841.0 532.3L834.7 523.4L825.9 515.4L814.7 508.7L801.8 503.5L787.5 500.0L772.4 498.4L669.9 556.0L670.3 565.9L673.7 575.4L680.0 584.4L688.9 592.4L700.0 599.1L713.0 604.3L727.3 607.8Z" fill="#003a00" opacity=".33"/><path d="M742.3 605.1L844.8 547.5L844.4 537.7L841.0 528.1L834.7 519.2L825.9 511.2L814.7 504.4L801.8 499.2L787.5 495.8L772.4 494.2L669.9 551.8L670.3 561.6L673.7 571.2L680.0 580.2L688.9 588.2L700.0 594.9L713.0 600.1L727.3 603.6Z" fill="url(#f8)"/><path d="M739.3 601.1L847.6 544.3L847.7 534.2L844.8 524.3L838.8 514.9L830.2 506.5L819.1 499.3L806.1 493.7L791.6 489.8L776.2 487.9L667.8 544.7L667.7 554.8L670.7 564.7L676.6 574.1L685.3 582.5L696.4 589.6L709.4 595.3L723.9 599.1Z" fill="url(#f7)"/><path d="M739.3 601.1L847.6 544.3L847.7 534.2L844.8 524.3L838.8 514.9L830.2 506.5L819.1 499.3L806.1 493.7L791.6 489.8L776.2 487.9L667.8 544.7L667.7 554.8L670.7 564.7L676.6 574.1L685.3 582.5L696.4 589.6L709.4 595.3L723.9 599.1Z" fill="#003a00" opacity=".33"/><path d="M739.3 596.7L847.6 539.9L847.7 529.8L844.8 519.9L838.8 510.5L830.2 502.1L819.1 495.0L806.1 489.3L791.6 485.5L776.2 483.5L667.8 540.3L667.7 550.4L670.7 560.3L676.6 569.7L685.3 578.1L696.4 585.3L709.4 590.9L723.9 594.8Z" fill="url(#f7)"/><path d="M736.1 592.5L850.8 536.9L851.6 526.5L849.1 516.3L843.6 506.5L835.2 497.7L824.3 490.0L811.2 483.9L796.6 479.6L780.9 477.2L666.2 532.8L665.4 543.2L667.9 553.5L673.4 563.2L681.8 572.1L692.7 579.7L705.8 585.8L720.4 590.1Z" fill="url(#f6)"/><path d="M736.1 592.5L850.8 536.9L851.6 526.5L849.1 516.3L843.6 506.5L835.2 497.7L824.3 490.0L811.2 483.9L796.6 479.6L780.9 477.2L666.2 532.8L665.4 543.2L667.9 553.5L673.4 563.2L681.8 572.1L692.7 579.7L705.8 585.8L720.4 590.1Z" fill="#003a00" opacity=".33"/><path d="M736.1 588.0L850.8 532.4L851.6 522.0L849.1 511.8L843.6 502.0L835.2 493.1L824.3 485.5L811.2 479.4L796.6 475.1L780.9 472.7L666.2 528.3L665.4 538.7L667.9 548.9L673.4 558.7L681.8 567.5L692.7 575.2L705.8 581.3L720.4 585.6Z" fill="url(#f6)"/><path d="M732.7 583.7L854.1 529.3L855.4 518.7L853.5 508.1L848.4 497.9L840.4 488.6L829.6 480.5L816.5 473.9L801.7 469.0L785.8 466.2L664.4 520.5L663.1 531.2L665.0 541.8L670.1 551.9L678.1 561.3L688.9 569.4L702.0 576.0L716.8 580.8Z" fill="url(#f5)"/><path d="M732.7 583.7L854.1 529.3L855.4 518.7L853.5 508.1L848.4 497.9L840.4 488.6L829.6 480.5L816.5 473.9L801.7 469.0L785.8 466.2L664.4 520.5L663.1 531.2L665.0 541.8L670.1 551.9L678.1 561.3L688.9 569.4L702.0 576.0L716.8 580.8Z" fill="#003a00" opacity=".33"/><path d="M732.7 579.0L854.1 524.6L855.4 514.0L853.5 503.4L848.4 493.2L840.4 483.9L829.6 475.8L816.5 469.2L801.7 464.4L785.8 461.5L664.4 515.8L663.1 526.5L665.0 537.1L670.1 547.3L678.1 556.6L688.9 564.7L702.0 571.3L716.8 576.1Z" fill="url(#f5)"/><path d="M729.3 574.5L857.4 520.0L859.3 509.0L857.7 498.0L852.8 487.3L844.8 477.5L833.9 468.9L820.6 461.8L805.4 456.6L788.9 453.3L660.8 507.8L658.9 518.9L660.5 529.9L665.4 540.6L673.4 550.4L684.3 559.0L697.6 566.0L712.8 571.3Z" fill="url(#f4)"/><path d="M729.3 574.5L857.4 520.0L859.3 509.0L857.7 498.0L852.8 487.3L844.8 477.5L833.9 468.9L820.6 461.8L805.4 456.6L788.9 453.3L660.8 507.8L658.9 518.9L660.5 529.9L665.4 540.6L673.4 550.4L684.3 559.0L697.6 566.0L712.8 571.3Z" fill="#003a00" opacity=".33"/><path d="M729.3 569.7L857.4 515.2L859.3 504.2L857.7 493.1L852.8 482.5L844.8 472.7L833.9 464.1L820.6 457.0L805.4 451.8L788.9 448.5L660.8 503.0L658.9 514.0L660.5 525.1L665.4 535.7L673.4 545.5L684.3 554.2L697.6 561.2L712.8 566.5Z" fill="url(#f4)"/><path d="M725.7 565.1L861.0 510.7L863.4 499.3L862.2 487.8L857.5 476.6L849.6 466.3L838.6 457.2L825.1 449.6L809.6 443.9L792.6 440.3L657.3 494.7L655.0 506.2L656.1 517.7L660.8 528.8L668.7 539.1L679.7 548.2L693.2 555.8L708.7 561.5Z" fill="url(#f3)"/><path d="M725.7 565.1L861.0 510.7L863.4 499.3L862.2 487.8L857.5 476.6L849.6 466.3L838.6 457.2L825.1 449.6L809.6 443.9L792.6 440.3L657.3 494.7L655.0 506.2L656.1 517.7L660.8 528.8L668.7 539.1L679.7 548.2L693.2 555.8L708.7 561.5Z" fill="#003a00" opacity=".33"/><path d="M725.7 560.2L861.0 505.7L863.4 494.3L862.2 482.8L857.5 471.7L849.6 461.4L838.6 452.2L825.1 444.7L809.6 439.0L792.6 435.3L657.3 489.8L655.0 501.2L656.1 512.7L660.8 523.8L668.7 534.2L679.7 543.3L693.2 550.8L708.7 556.5Z" fill="url(#f3)"/><path d="M722.6 555.5L863.4 499.4L865.9 487.5L864.8 475.6L860.1 464.0L851.9 453.3L840.6 443.8L826.6 435.9L810.5 429.9L792.9 426.1L652.0 482.2L649.5 494.0L650.6 506.0L655.4 517.5L663.6 528.3L674.9 537.8L688.8 545.7L704.9 551.7Z" fill="url(#f2)"/><path d="M722.6 555.5L863.4 499.4L865.9 487.5L864.8 475.6L860.1 464.0L851.9 453.3L840.6 443.8L826.6 435.9L810.5 429.9L792.9 426.1L652.0 482.2L649.5 494.0L650.6 506.0L655.4 517.5L663.6 528.3L674.9 537.8L688.8 545.7L704.9 551.7Z" fill="#003a00" opacity=".33"/><path d="M722.6 550.4L863.4 494.3L865.9 482.4L864.8 470.5L860.1 458.9L851.9 448.2L840.6 438.7L826.6 430.8L810.5 424.8L792.9 421.0L652.0 477.1L649.5 488.9L650.6 500.9L655.4 512.5L663.6 523.2L674.9 532.7L688.8 540.6L704.9 546.6Z" fill="url(#f2)"/><path d="M719.3 545.6L864.1 488.4L866.8 476.3L865.7 464.0L860.9 452.1L852.6 441.1L841.1 431.3L826.8 423.2L810.4 417.0L792.3 413.0L647.4 470.2L644.7 482.3L645.8 494.6L650.6 506.4L658.9 517.5L670.5 527.3L684.7 535.4L701.2 541.6Z" fill="url(#f1)"/><path d="M719.3 545.6L864.1 488.4L866.8 476.3L865.7 464.0L860.9 452.1L852.6 441.1L841.1 431.3L826.8 423.2L810.4 417.0L792.3 413.0L647.4 470.2L644.7 482.3L645.8 494.6L650.6 506.4L658.9 517.5L670.5 527.3L684.7 535.4L701.2 541.6Z" fill="#003a00" opacity=".33"/><path d="M719.3 540.3L864.1 483.2L866.8 471.0L865.7 458.8L860.9 446.9L852.6 435.9L841.1 426.1L826.8 417.9L810.4 411.8L792.3 407.8L647.4 464.9L644.7 477.1L645.8 489.3L650.6 501.2L658.9 512.3L670.5 522.0L684.7 530.2L701.2 536.4Z" fill="url(#f1)"/><path d="M715.4 535.4L864.0 477.3L866.8 464.9L865.8 452.4L861.0 440.2L852.6 428.9L840.9 418.9L826.3 410.5L809.5 404.1L791.1 400.0L642.5 458.0L639.7 470.5L640.7 483.0L645.5 495.2L653.9 506.5L665.6 516.5L680.2 524.9L697.0 531.3Z" fill="url(#f0)"/><path d="M715.4 535.4L864.0 477.3L866.8 464.9L865.8 452.4L861.0 440.2L852.6 428.9L840.9 418.9L826.3 410.5L809.5 404.1L791.1 400.0L642.5 458.0L639.7 470.5L640.7 483.0L645.5 495.2L653.9 506.5L665.6 516.5L680.2 524.9L697.0 531.3Z" fill="#003a00" opacity=".33"/><path d="M715.4 530.0L864.0 472.0L866.8 459.6L865.8 447.0L861.0 434.9L852.6 423.5L840.9 413.5L826.3 405.1L809.5 398.8L791.1 394.6L642.5 452.7L639.7 465.1L640.7 477.6L645.5 489.8L653.9 501.1L665.6 511.1L680.2 519.5L697.0 525.9Z" fill="url(#f0)"/><path d="M715.4 530.0L719.3 540.3L722.6 550.4L725.7 560.2L729.3 569.7L732.7 579.0L736.1 588.0L739.3 596.7L742.3 605.1L745.3 613.3L748.7 621.1L752.8 628.7L756.8 636.0L760.4 643.2L763.6 650.2L766.6 656.9L769.2 663.5L771.5 669.9M736.6 521.7L739.9 532.2L742.7 542.4L745.1 552.4L747.6 561.9L750.1 571.2L752.5 580.1L754.7 588.6L757.0 596.9L759.0 605.0L761.6 612.8L764.9 620.1L768.1 627.2L770.9 634.2L773.4 641.1L775.7 647.9L777.8 654.5L779.6 660.9M757.9 513.4L760.6 524.0L762.8 534.4L764.4 544.6L765.9 554.1L767.4 563.5L768.9 572.1L770.2 580.5L771.6 588.7L772.8 596.8L774.5 604.4L777.0 611.5L779.4 618.4L781.5 625.3L783.1 632.1L784.8 638.9L786.3 645.4L787.8 651.8M779.1 505.1L781.3 515.8L782.9 526.3L783.7 536.8L784.2 546.4L784.7 555.7L785.3 564.2L785.7 572.4L786.2 580.5L786.5 588.6L787.4 596.1L789.1 602.9L790.7 609.6L792.0 616.3L792.9 623.1L793.9 629.8L794.9 636.3L795.9 642.7M800.3 496.8L802.0 507.7L803.0 518.3L803.0 529.1L802.5 538.6L802.1 547.9L801.7 556.2L801.2 564.2L800.9 572.2L800.3 580.3L800.3 587.7L801.2 594.3L802.0 600.7L802.5 607.4L802.7 614.1L803.0 620.8L803.4 627.3L804.1 633.6M821.6 488.6L822.7 499.5L823.2 510.3L822.4 521.3L820.8 530.8L819.4 540.2L818.0 548.3L816.7 556.1L815.5 564.0L814.0 572.1L813.2 579.4L813.2 585.7L813.2 591.9L813.0 598.4L812.5 605.1L812.1 611.8L812.0 618.2L812.2 624.5M842.8 480.3L843.4 491.3L843.3 502.3L841.7 513.5L839.1 523.0L836.7 532.4L834.4 540.3L832.2 548.0L830.2 555.8L827.8 563.9L826.1 571.1L825.3 577.1L824.5 583.1L823.5 589.4L822.3 596.1L821.1 602.7L820.6 609.2L820.4 615.5M864.0 472.0L864.1 483.2L863.4 494.3L861.0 505.7L857.4 515.2L854.1 524.6L850.8 532.4L847.6 539.9L844.8 547.5L841.5 555.6L839.0 562.7L837.4 568.5L835.8 574.3L834.0 580.5L832.1 587.1L830.2 593.7L829.1 600.1L828.5 606.4M639.7 465.1L644.7 477.1L649.5 488.9L655.0 501.2L658.9 514.0L663.1 526.5L665.4 538.7L667.7 550.4L670.3 561.6L673.7 572.7L676.7 583.3L679.2 593.7L681.9 603.8L684.8 613.5L687.9 622.8L691.1 631.9L693.8 640.2L696.0 648.0M640.7 477.6L645.8 489.3L650.6 500.9L656.1 512.7L660.5 525.1L665.0 537.1L667.9 548.9L670.7 560.3L673.7 571.2L677.4 581.8L680.9 592.1L684.0 602.2L687.2 612.1L690.5 621.5L694.0 630.5L697.4 639.3L700.4 647.4L702.8 655.0M645.5 489.8L650.6 501.2L655.4 512.5L660.8 523.8L665.4 535.7L670.1 547.3L673.4 558.7L676.6 569.7L680.0 580.2L683.9 590.4L687.7 600.3L691.2 610.1L694.9 619.5L698.6 628.6L702.2 637.3L705.9 645.8L709.0 653.6L711.5 661.0M653.9 501.1L658.9 512.3L663.6 523.2L668.7 534.2L673.4 545.5L678.1 556.6L681.8 567.5L685.3 578.1L688.9 588.2L692.8 597.9L696.8 607.4L700.7 616.8L704.7 625.9L708.6 634.6L712.4 643.0L716.2 651.0L719.3 658.6L721.9 665.8M665.6 511.1L670.5 522.0L674.9 532.7L679.7 543.3L684.3 554.2L688.9 564.7L692.7 575.2L696.4 585.3L700.0 594.9L703.9 604.2L707.9 613.3L712.1 622.2L716.3 630.9L720.3 639.2L724.1 647.2L727.8 654.9L731.0 662.2L733.6 669.2M680.2 519.5L684.7 530.2L688.8 540.6L693.2 550.8L697.6 561.2L702.0 571.3L705.8 581.3L709.4 590.9L713.0 600.1L716.7 609.0L720.6 617.6L724.9 626.1L729.2 634.3L733.2 642.2L736.9 649.8L740.5 657.2L743.5 664.3L746.1 671.1M697.0 525.9L701.2 536.4L704.9 546.6L708.7 556.5L712.8 566.5L716.8 576.1L720.4 585.6L723.9 594.8L727.3 603.6L730.6 612.0L734.4 620.2L738.7 628.3L742.9 636.1L746.7 643.6L750.2 650.9L753.6 657.9L756.4 664.7L758.9 671.3" fill="none" stroke="#0a4a00" stroke-width="2.6" opacity=".26" stroke-linejoin="round"/><path d="M711.5 519.5L863.7 460.7L866.7 448.0L865.8 435.2L860.9 422.7L852.4 411.2L840.5 400.9L825.7 392.3L808.6 385.7L789.8 381.5L637.6 440.3L634.6 453.0L635.5 465.8L640.4 478.2L648.9 489.8L660.8 500.1L675.6 508.7L692.7 515.2Z" fill="url(#rf)"/><path d="M654.5 433.7L728.4 513.0M671.4 427.2L745.3 506.4M688.3 420.7L762.2 499.9M705.2 414.1L779.2 493.4M722.1 407.6L796.1 486.8M739.1 401.1L813.0 480.3M756.0 394.5L829.9 473.7M772.9 388.0L846.8 467.2M635.5 468.0L828.8 393.3M654.0 487.8L847.3 413.1M672.5 507.6L865.8 432.9" fill="none" stroke="#2a7a00" stroke-width="1.6" opacity=".38"/><path d="M676 417L711 457L818 410L818 404L711 451L676 411Z" fill="#0a9a1a"/><path d="M676 411L779 372L818 404L711 451Z" fill="url(#ph)"/><path d="M711.5 519.5L863.7 460.7L866.7 448.0L865.8 435.2L860.9 422.7L852.4 411.2L840.5 400.9L825.7 392.3L808.6 385.7L789.8 381.5L637.6 440.3L634.6 453.0L635.5 465.8L640.4 478.2L648.9 489.8L660.8 500.1L675.6 508.7L692.7 515.2Z" fill="none" stroke="url(#rlg)" stroke-width="2.8" stroke-linejoin="round"/><path d="M711.5 519.5L705.9 500.0L728.4 513.0M728.4 513.0L723.5 493.3L745.3 506.4M745.3 506.4L741.1 486.6L762.2 499.9M762.2 499.9L758.7 480.0L779.2 493.4M779.2 493.4L776.4 473.3L796.1 486.8M796.1 486.8L794.0 466.6L813.0 480.3M813.0 480.3L811.6 459.9L829.9 473.7M829.9 473.7L829.2 453.3L846.8 467.2M846.8 467.2L846.8 446.6L863.7 460.7M863.7 460.7L864.4 439.9L866.6 440.3M866.6 440.3L867.7 418.8L859.5 420.3M859.5 420.3L860.6 398.1L843.1 402.8M843.1 402.8L843.9 379.8L819.1 389.4M819.1 389.4L819.2 365.8L789.8 381.5M789.8 381.5L788.9 357.4L772.9 388.0M772.9 388.0L771.3 364.1L756.0 394.5M756.0 394.5L753.7 370.8L739.1 401.1M739.1 401.1L736.1 377.4L722.1 407.6M722.1 407.6L718.5 384.1L705.2 414.1M705.2 414.1L700.8 390.8L688.3 420.7M688.3 420.7L683.2 397.5L671.4 427.2M671.4 427.2L665.6 404.1L654.5 433.7M654.5 433.7L648.0 410.8L637.6 440.3M637.6 440.3L630.4 417.5L634.7 460.7M634.7 460.7L627.1 438.6L641.8 480.6M641.8 480.6L634.2 459.3L658.2 498.2M658.2 498.2L650.9 477.6L682.2 511.6M682.2 511.6L675.6 491.6L711.5 519.5" fill="none" stroke="url(#ru)" stroke-width="2" stroke-linejoin="round"/><path d="M705.9 500.0L864.4 439.9L867.7 426.8L866.9 413.5L862.1 400.6L853.4 388.5L841.2 377.8L826.0 368.8L808.3 361.9L788.9 357.4L630.4 417.5L627.1 430.6L627.9 443.9L632.8 456.8L641.4 468.9L653.6 479.6L668.8 488.6L686.5 495.5Z" fill="none" stroke="url(#ru)" stroke-width="3.2" stroke-linejoin="round"/></svg>
<div class="a" style="left:1546.500px;top:183.500px;width:380px;height:754px;background:#fff;border:1px solid #e2e2e2;border-radius:7px 0 0 7px"></div><svg style="left:1557px;top:191px" width="15" height="17" viewBox="0 0 15 17"><rect x="0" y="0" width="6.800" height="3.200" rx=".6" fill="#ee9433"/><rect x="7.800" y="6.300" width="6.700" height="3.400" rx=".6" fill="#ee9433"/><rect x="7.800" y="12.300" width="6.700" height="3.600" rx=".6" fill="#ee9433"/><path d="M3.400 4.500v9.500h4M3.400 8h4" fill="none" stroke="#555" stroke-width="1.200"/></svg><span class="t b" style="top:193.54px;font-size:12.3px;left:1578px;color:#737373;letter-spacing:-.45px;">Yapı Ağacı</span><svg style="left:1902px;top:192px" width="14" height="14" viewBox="0 0 14 14" fill="none" stroke="#444" stroke-width="1"><path d="M8.500 1.500l4 4-1.200.6-2 .2-2 3.200-.3 2-5.300-5.300 2-.3 3.200-2 .2-2zM4.300 9.700L1 13"/></svg><div class="a" style="left:1548px;top:223px;width:380px;height:27.500px;background:#f8f8f8;border-radius:8px 0 0 8px"></div><svg style="left:1550px;top:226px" width="21" height="21" viewBox="1550 226 21 21"><circle cx="1556.500" cy="232.500" r="5.600" fill="#3a9f4e"/><path d="M1553.700 231.700h5.600M1556.500 228.900v5.600" stroke="#fff" stroke-width="1.300"/>
<circle cx="1564.400" cy="240" r="6.300" fill="#f8f8f8"/><circle cx="1564.400" cy="240" r="5.600" fill="#0a78d7"/><path d="M1561.500 240h5.800" stroke="#fff" stroke-width="1.500"/></svg><svg style="left:1552px;top:258px" width="13" height="13" viewBox="0 0 13 13" fill="none" stroke="#666" stroke-width="1.100"><circle cx="4.800" cy="4.800" r="4"/><path d="M7.700 7.700l4.300 4.300"/></svg><span class="t" style="top:258.84px;font-size:12px;left:1575px;color:#767676;">Search</span><div class="a" style="left:1547.500px;top:276px;width:373px;height:1px;background:#c6c6c6"></div><div class="a" style="left:1547.500px;top:277px;width:373px;height:24px;background:#efefef"></div><div class="a" style="left:1576.500px;top:301px;width:0;height:292px;border-left:1px dotted #c4c4c4"></div><svg style="left:1553px;top:284px" width="8" height="8" viewBox="0 0 8 8"><path d="M7.500 0v7.500H0z" fill="#111"/></svg><div class="a" style="left:1562px;top:289px;width:5px;height:1px;background:#bbb"></div><svg style="left:1570px;top:283px" width="15" height="13" viewBox="0 0 15 13"><path d="M7.500 0L15 7h-2.300v6H9V8.500H6V13H2.300V7H0z" fill="#0a78d7"/></svg><span class="t" style="top:282.34px;font-size:12px;left:1593px;">Yapı</span><svg style="left:1574px;top:309.0px" width="8" height="8" viewBox="0 0 8 8"><path d="M.5 0l6.500 4L.5 8z" fill="#111"/></svg><div class="a" style="left:1582px;top:313.0px;width:5px;height:1px;background:#bbb"></div><svg style="left:1590.8px;top:306.5px" width="14" height="13" viewBox="0 0 14 13"><rect x="4.300" y="0" width="5.500" height="5.500" rx=".5" fill="#1976d2"/><rect x="0" y="7" width="5.800" height="5.800" rx=".5" fill="#e53935"/><rect x="7.600" y="7" width="5.800" height="5.800" rx=".5" fill="#43a047"/></svg><span class="t" style="top:306.75px;font-size:11.7px;left:1613.4px;">Yapı Elemanları</span><svg style="left:1574px;top:333.0px" width="8" height="8" viewBox="0 0 8 8"><path d="M.5 0l6.500 4L.5 8z" fill="#111"/></svg><div class="a" style="left:1582px;top:337.0px;width:5px;height:1px;background:#bbb"></div><svg style="left:1590.8px;top:330.5px" width="14" height="13" viewBox="0 0 14 13"><rect x="4.300" y="0" width="5.500" height="5.500" rx=".5" fill="#1976d2"/><rect x="0" y="7" width="5.800" height="5.800" rx=".5" fill="#e53935"/><rect x="7.600" y="7" width="5.800" height="5.800" rx=".5" fill="#43a047"/></svg><span class="t" style="top:330.75px;font-size:11.7px;left:1613.4px;">Makrolar</span><svg style="left:1574px;top:357.0px" width="8" height="8" viewBox="0 0 8 8"><path d="M.5 0l6.500 4L.5 8z" fill="#111"/></svg><div class="a" style="left:1582px;top:361.0px;width:5px;height:1px;background:#bbb"></div><svg style="left:1590.8px;top:354.5px" width="14" height="13" viewBox="0 0 14 13"><rect x="4.300" y="0" width="5.500" height="5.500" rx=".5" fill="#1976d2"/><rect x="0" y="7" width="5.800" height="5.800" rx=".5" fill="#e53935"/><rect x="7.600" y="7" width="5.800" height="5.800" rx=".5" fill="#43a047"/></svg><span class="t" style="top:354.75px;font-size:11.7px;left:1613.4px;">Birleşimler</span><svg style="left:1574px;top:379.0px" width="8" height="8" viewBox="0 0 8 8"><path d="M.5 0l6.500 4L.5 8z" fill="#111"/></svg><div class="a" style="left:1582px;top:383.0px;width:5px;height:1px;background:#bbb"></div><svg style="left:1589px;top:375.5px" width="16" height="16" viewBox="0 0 16 16" stroke="#333" stroke-width="1.200"><path d="M4.500 0v16M11.500 0v16M0 4.500h16M0 11.500h16"/></svg><svg style="left:1609.5px;top:379.0px" width="14" height="9" viewBox="0 0 14 9"><path d="M.3 4.500C2 1.500 4.300.3 7 .3s5 1.200 6.700 4.200C12 7.500 9.700 8.700 7 8.700S2 7.500.3 4.500z" fill="#555"/><circle cx="7" cy="4.500" r="2.900" fill="#fff"/><circle cx="7" cy="4.500" r="1.700" fill="#555"/></svg><span class="t" style="top:376.75px;font-size:11.7px;left:1627px;">Akslar</span><svg style="left:1574px;top:399.0px" width="8" height="8" viewBox="0 0 8 8"><path d="M.5 0l6.500 4L.5 8z" fill="#111"/></svg><div class="a" style="left:1582px;top:403.0px;width:5px;height:1px;background:#bbb"></div><svg style="left:1589px;top:400.5px" width="16" height="6" viewBox="0 0 16 6" fill="none" stroke="#666" stroke-width="1"><circle cx="3" cy="3" r="1.800"/><path d="M5 3h10"/></svg><svg style="left:1609.5px;top:399.0px" width="14" height="9" viewBox="0 0 14 9"><path d="M.3 4.500C2 1.500 4.300.3 7 .3s5 1.200 6.700 4.200C12 7.500 9.700 8.700 7 8.700S2 7.500.3 4.500z" fill="#555"/><circle cx="7" cy="4.500" r="2.900" fill="#fff"/><circle cx="7" cy="4.500" r="1.700" fill="#555"/></svg><span class="t" style="top:396.75px;font-size:11.7px;left:1627px;">Katlar</span><div class="a" style="left:1577px;top:425.0px;width:10px;height:1px;background:#bbb"></div><svg style="left:1590px;top:419.0px" width="15" height="13" viewBox="0 0 15 13"><rect x=".600" y=".600" width="13.800" height="11.800" fill="#fff" stroke="#333" stroke-width="1.100"/><rect x="0" y="0" width="15" height="2.600" fill="#0a78d7"/></svg><span class="t" style="top:418.75px;font-size:11.7px;left:1613.4px;">Kayıtlı Bakışlar</span><svg style="left:1574px;top:445.0px" width="8" height="8" viewBox="0 0 8 8"><path d="M.5 0l6.500 4L.5 8z" fill="#111"/></svg><div class="a" style="left:1582px;top:449.0px;width:5px;height:1px;background:#bbb"></div><svg style="left:1590px;top:442.0px" width="14" height="15" viewBox="0 0 14 15" fill="none" stroke="#222" stroke-width="1.500"><path d="M7 0v10M2 5.500l5 5 5-5M.5 14h13"/></svg><span class="t" style="top:442.75px;font-size:11.7px;left:1613.4px;">Yükler</span><svg style="left:1574px;top:469.0px" width="8" height="8" viewBox="0 0 8 8"><path d="M.5 0l6.500 4L.5 8z" fill="#111"/></svg><div class="a" style="left:1582px;top:473.0px;width:5px;height:1px;background:#bbb"></div><svg style="left:1590.8px;top:466.5px" width="14" height="13" viewBox="0 0 14 13"><rect x="4.300" y="0" width="5.500" height="5.500" rx=".5" fill="#1976d2"/><rect x="0" y="7" width="5.800" height="5.800" rx=".5" fill="#e53935"/><rect x="7.600" y="7" width="5.800" height="5.800" rx=".5" fill="#43a047"/></svg><span class="t" style="top:466.75px;font-size:11.7px;left:1613.4px;">Malzemeler</span><div class="a" style="left:1577px;top:497.0px;width:10px;height:1px;background:#bbb"></div><svg style="left:1590.8px;top:490.5px" width="14" height="13" viewBox="0 0 14 13"><rect x="4.300" y="0" width="5.500" height="5.500" rx=".5" fill="#1976d2"/><rect x="0" y="7" width="5.800" height="5.800" rx=".5" fill="#e53935"/><rect x="7.600" y="7" width="5.800" height="5.800" rx=".5" fill="#43a047"/></svg><span class="t" style="top:490.75px;font-size:11.7px;left:1613.4px;">Katmanlar</span><svg style="left:1574px;top:517.0px" width="8" height="8" viewBox="0 0 8 8"><path d="M.5 0l6.500 4L.5 8z" fill="#111"/></svg><div class="a" style="left:1582px;top:521.0px;width:5px;height:1px;background:#bbb"></div><svg style="left:1590.8px;top:514.5px" width="14" height="13" viewBox="0 0 14 13"><rect x="4.300" y="0" width="5.500" height="5.500" rx=".5" fill="#1976d2"/><rect x="0" y="7" width="5.800" height="5.800" rx=".5" fill="#e53935"/><rect x="7.600" y="7" width="5.800" height="5.800" rx=".5" fill="#43a047"/></svg><span class="t" style="top:514.75px;font-size:11.7px;left:1613.4px;">Seçim Gurupları</span><svg style="left:1574px;top:541.0px" width="8" height="8" viewBox="0 0 8 8"><path d="M.5 0l6.500 4L.5 8z" fill="#111"/></svg><div class="a" style="left:1582px;top:545.0px;width:5px;height:1px;background:#bbb"></div><svg style="left:1590px;top:539.0px" width="15" height="13" viewBox="0 0 15 13"><rect width="15" height="3.300" fill="#0a78d7"/><g fill="#9a9a9a"><rect x="0" y="4.800" width="4.300" height="3"/><rect x="5.300" y="4.800" width="4.300" height="3"/><rect x="10.600" y="4.800" width="4.400" height="3"/><rect x="0" y="9.300" width="4.300" height="3"/><rect x="5.300" y="9.300" width="4.300" height="3"/><rect x="10.600" y="9.300" width="4.400" height="3"/></g></svg><span class="t" style="top:538.75px;font-size:11.7px;left:1613.4px;">Tablolar</span><svg style="left:1574px;top:565.0px" width="8" height="8" viewBox="0 0 8 8"><path d="M.5 0l6.500 4L.5 8z" fill="#111"/></svg><div class="a" style="left:1582px;top:569.0px;width:5px;height:1px;background:#bbb"></div><svg style="left:1590.500px;top:561.5px" width="13" height="15" viewBox="0 0 13 15"><rect x=".900" y="2" width="11.200" height="12" fill="#fff" stroke="#e8923a" stroke-width="1.600"/><rect x="4" y="0" width="5" height="3.200" rx=".8" fill="#444"/><path d="M3.500 6h6M3.500 8.200h6M3.500 10.400h6" stroke="#444" stroke-width="1"/></svg><span class="t" style="top:562.75px;font-size:11.7px;left:1613.4px;">Raporlar</span><svg style="left:1574px;top:589.0px" width="8" height="8" viewBox="0 0 8 8"><path d="M.5 0l6.500 4L.5 8z" fill="#111"/></svg><div class="a" style="left:1582px;top:593.0px;width:5px;height:1px;background:#bbb"></div><svg style="left:1589px;top:585.5px" width="16" height="15" viewBox="0 0 16 15" fill="none" stroke="#666" stroke-width="1"><rect x=".500" y=".500" width="3.500" height="13.500"/><path d="M.500 3.500h2M.500 6.500h2M.500 9.500h2M5.500 1v13h10zM7.500 7.500v4.500h3.500z"/></svg><span class="t" style="top:586.75px;font-size:11.7px;left:1613.4px;">Çizimler</span><div class="a" style="left:1554.500px;top:936.500px;width:98px;height:32px;background:#fff;border:1px solid #e2e2e2;border-top:1px solid #fff;border-radius:0 0 7px 7px"></div><svg style="left:1566px;top:943.8px" width="15" height="17" viewBox="0 0 15 17"><rect x="0" y="0" width="6.800" height="3.200" rx=".6" fill="#ee9433"/><rect x="7.800" y="6.300" width="6.700" height="3.400" rx=".6" fill="#ee9433"/><rect x="7.800" y="12.300" width="6.700" height="3.600" rx=".6" fill="#ee9433"/><path d="M3.400 4.500v9.500h4M3.400 8h4" fill="none" stroke="#555" stroke-width="1.200"/></svg><span class="t" style="top:946.84px;font-size:12px;left:1587px;">Yapı Ağacı</span><svg style="left:1664px;top:943px" width="20" height="20" viewBox="0 0 20 20"><rect x="0" y="0" width="15" height="3" fill="#0a78d7"/><rect x=".500" y="3" width="14" height="10" fill="#fff" stroke="#999" stroke-width="1"/><path d="M2 6h3M6.500 6h6M2 8.500h3M6.500 8.500h6M2 11h3M6.500 11h3" stroke="#888" stroke-width="1.200"/><circle cx="14" cy="13.800" r="3.200" fill="none" stroke="#0a78d7" stroke-width="2.400" stroke-dasharray="1.600 .900"/><circle cx="14" cy="13.800" r="2.300" fill="#0a78d7"/><circle cx="14" cy="13.800" r="1" fill="#fff"/></svg><span class="t" style="top:946.84px;font-size:12px;left:1686px;">Özellikler</span><div id="status"></div>
<div class="a" style="left:34.500px;top:979.500px;width:75px;height:26px;background:#fff;border:1px solid #e6e6e6;border-bottom:none;border-radius:6px 6px 0 0"></div><div class="a" style="left:115.500px;top:979.500px;width:100px;height:26px;background:#fff;border:1px solid #e6e6e6;border-bottom:none;border-radius:6px 6px 0 0"></div><svg style="left:40px;top:984px" width="18" height="16" viewBox="0 0 18 16"><rect x="0" y=".5" width="18" height="4.500" fill="#0a78d7"/>
<g fill="#b9b9b9"><rect x="0" y="6.500" width="5.300" height="3.600"/><rect x="6.300" y="6.500" width="5.300" height="3.600"/><rect x="12.600" y="6.500" width="5.400" height="3.600"/><rect x="0" y="11.500" width="5.300" height="3.600"/><rect x="6.300" y="11.500" width="5.300" height="3.600"/><rect x="12.600" y="11.500" width="5.400" height="3.600"/></g></svg><span class="t" style="top:986.34px;font-size:12px;left:62px;">Tablolar</span><svg style="left:121px;top:983px" width="18" height="18" viewBox="0 0 18 18"><circle cx="8.800" cy="8.700" r="8.500" fill="#e84545"/><rect x="7.600" y="3.500" width="2.400" height="7" fill="#fff"/><rect x="7.600" y="11.800" width="2.400" height="2.400" fill="#fff"/></svg><span class="t" style="top:986.34px;font-size:12px;left:143.3px;">Hata Kontrol</span><span class="t gr" style="top:1012.48px;font-size:11.6px;left:35px;">Sta Muh. Mus. Ltd. Sti.</span><span class="t gr" style="top:1012.48px;font-size:11.6px;left:165px;">Son işlem süresi (0,829)</span><div class="a" style="left:157.500px;top:1008px;width:1px;height:22px;background:#e8e8e8"></div><span class="t gr" style="top:1013.14px;font-size:12px;left:1713.3px;">Birimler</span><span class="t gr" style="top:1013.14px;font-size:12px;left:1777px;">Ortho</span><span class="t gr" style="top:1013.14px;font-size:12px;left:1815.5px;">Nokta Yakalama</span><svg style="left:1760px;top:1015px" width="160" height="8" viewBox="1760 1015 160 8" fill="none" stroke="#777" stroke-width="1"><path d="M1761 1016.500l4.200 4.200 4.200-4.200M1908.500 1016.500l4.200 4.200 4.200-4.200"/></svg>
</div>
</body></html>
